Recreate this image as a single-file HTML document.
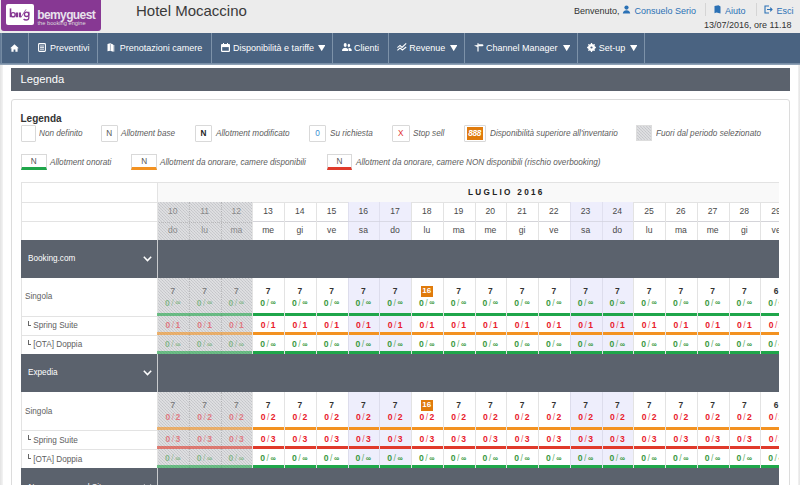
<!DOCTYPE html><html><head><meta charset="utf-8"><style>
*{margin:0;padding:0;box-sizing:border-box}
html,body{width:800px;height:485px;overflow:hidden;background:#fff;font-family:"Liberation Sans", sans-serif;}
.abs{position:absolute}
#top{position:absolute;left:0;top:0;width:800px;height:33px;background:#ececec}
#logo{position:absolute;left:1px;top:0;width:100px;height:30.5px;background:#873893;border-radius:0 0 3px 3px}
#nav{position:absolute;left:0;top:33px;width:800px;height:31px;background:#4a6381;border-bottom:1px solid #3f5670}
.nv{position:absolute;top:0;height:30px;border-left:1px solid #7e93aa;color:#fff;font-size:9px;line-height:30px;white-space:nowrap}
.t{position:absolute;white-space:nowrap}
.hbar{position:absolute;background:#5b626d;color:#fff}
.lbox{position:absolute;border:1px solid #dcdcdc;background:#fff}
.lt{position:absolute;font-size:9.2px;font-style:italic;color:#5c5c5c;white-space:nowrap;line-height:10px;transform:scaleX(0.89);transform-origin:0 0;margin-top:-0.5px}
.grid{position:absolute;left:21px;top:182px;width:758px;height:303px;overflow:hidden}
.c{position:absolute;text-align:center;white-space:nowrap}
.hatch{background-color:#c3c4c8;background-image:repeating-linear-gradient(45deg,rgba(255,255,255,.38) 0 1px,transparent 1px 2.12px),repeating-linear-gradient(-45deg,rgba(255,255,255,.12) 0 1px,transparent 1px 2.12px)}
</style></head><body>
<div class="abs" style="left:0;top:64px;width:2.5px;height:421px;background:linear-gradient(90deg,#e2e2e2,#f4f4f4)"></div>
<div class="abs" style="left:798px;top:64px;width:2px;height:421px;background:linear-gradient(90deg,#f2f2f2,#e4e4e4)"></div>
<div id="top"></div>
<div id="logo"><div class="abs" style="left:5px;top:4px;width:27.5px;height:21px;background:#fff;border-radius:2px"></div><svg class="abs" style="left:0;top:0" width="40" height="30" viewBox="0 0 40 30"><g fill="none" stroke="#873893"><path d="M9.5 8.4 V17.2" stroke-width="1.6"/><circle cx="12.1" cy="14.7" r="2.1" stroke-width="1.4"/><path d="M15.9 12.4 V17.2 M18.9 12.4 V17.2" stroke-width="2.2"/><path d="M19.8 17.6 L25 9.4" stroke-width="0.8"/><circle cx="25.6" cy="14.3" r="2.2" stroke-width="1.3"/><path d="M27.8 11.8 V17.8 Q27.8 20 25.2 20 Q23.4 20 22.6 19" stroke-width="1.3"/></g></svg><div class="t" style="left:36.2px;top:7.6px;font-size:12px;font-weight:bold;color:#e8e2ec;line-height:14px;letter-spacing:-0.6px">bemyguest</div><div class="t" style="left:36.5px;top:20px;font-size:5.7px;color:#ddd;line-height:6px;letter-spacing:0px">the booking engine</div></div>
<div class="t" style="left:136px;top:0.5px;font-size:15px;line-height:20px;color:#3a3a3a">Hotel Mocaccino</div>
<div class="t" style="left:574px;top:4.5px;font-size:9px;line-height:12px;color:#333">Benvenuto,</div>
<svg class="abs" style="left:622px;top:4.5px" width="9" height="9" viewBox="0 0 9 9"><circle cx="4.5" cy="2.6" r="2.1" fill="#2b71b5"/><path d="M0.8 8.6 Q1 5.4 4.5 5.3 Q8 5.4 8.2 8.6Z" fill="#2b71b5"/></svg>
<div class="t" style="left:634.5px;top:4.5px;font-size:9px;line-height:12px;color:#2b71b5">Consuelo Serio</div>
<div class="abs" style="left:705px;top:3px;width:1px;height:13px;background:#d5d5d5"></div>
<svg class="abs" style="left:714px;top:4.5px" width="7" height="9" viewBox="0 0 7 9"><path d="M0.5 1 L4.5 0.2 L6.5 1.5 L6.5 8.6 L2.5 7.6 L0.5 8.2Z" fill="#2b71b5"/></svg>
<div class="t" style="left:725px;top:4.5px;font-size:9px;line-height:12px;color:#2b71b5">Aiuto</div>
<div class="abs" style="left:756px;top:3px;width:1px;height:13px;background:#d5d5d5"></div>
<svg class="abs" style="left:764px;top:4.5px" width="9" height="9" viewBox="0 0 9 9"><path d="M5 1 H1 V8 H5" fill="none" stroke="#2b71b5" stroke-width="1.1"/><path d="M3 4.5 H8 M6.2 2.7 L8 4.5 L6.2 6.3" fill="none" stroke="#2b71b5" stroke-width="1.1"/></svg>
<div class="t" style="left:776.5px;top:4.5px;font-size:9px;line-height:12px;color:#2b71b5">Esci</div>
<div class="t" style="left:704px;top:19px;font-size:9px;line-height:12px;color:#333">13/07/2016, ore 11.18</div>
<div id="nav">
<div class="abs" style="left:1px;top:0;width:1px;height:30px;background:#7e93aa"></div>
</div>
<div class="abs" style="left:0;top:33px;width:800px;height:30px;background:#4a6381"></div>
<div class="abs" style="left:0;top:62.5px;width:800px;height:2px;background:linear-gradient(#6c839d,#9aabbd)"></div>
<div class="abs" style="left:0;top:33px;width:2px;height:29.5px;background:linear-gradient(90deg,#5d7591,#7d92a9)"></div>
<div class="abs" style="left:28px;top:33px;width:1px;height:29.5px;background:#7d92a9"></div>
<div class="abs" style="left:97px;top:33px;width:1px;height:29.5px;background:#7d92a9"></div>
<div class="abs" style="left:211px;top:33px;width:1px;height:29.5px;background:#7d92a9"></div>
<div class="abs" style="left:332px;top:33px;width:1px;height:29.5px;background:#7d92a9"></div>
<div class="abs" style="left:388px;top:33px;width:1px;height:29.5px;background:#7d92a9"></div>
<div class="abs" style="left:464px;top:33px;width:1px;height:29.5px;background:#7d92a9"></div>
<div class="abs" style="left:577px;top:33px;width:1px;height:29.5px;background:#7d92a9"></div>
<div class="abs" style="left:644px;top:33px;width:1px;height:29.5px;background:#7d92a9"></div>
<div class="abs" style="left:10px;top:43.5px;line-height:0"><svg width="9" height="8" viewBox="0 0 9 8"><path d="M4.5 0.3 L8.8 4.2 L7.6 4.2 L7.6 7.8 L5.4 7.8 L5.4 5.4 L3.6 5.4 L3.6 7.8 L1.4 7.8 L1.4 4.2 L0.2 4.2Z" fill="#fff"/></svg></div>
<div class="abs" style="left:37.5px;top:43px;line-height:0"><svg width="8" height="9" viewBox="0 0 8 9"><rect x="0.6" y="0.6" width="6.8" height="7.8" rx="0.8" fill="none" stroke="#fff" stroke-width="1.1"/><path d="M2 3 H6 M2 4.6 H6 M2 6.2 H6" stroke="#fff" stroke-width="0.9"/></svg></div>
<div class="t" style="left:50px;top:42px;font-size:9px;line-height:12px;color:#fff">Preventivi</div>
<div class="abs" style="left:107.3px;top:43px;line-height:0"><svg width="8" height="9" viewBox="0 0 8 9"><path d="M0.5 1 L3.2 0.3 L6.2 1.6 L6.2 8.8 L3.2 7.8 L0.5 8.3Z" fill="#fff"/><path d="M6.8 2 V8.6" stroke="#fff" stroke-width="0.9"/><path d="M3.4 1.2 V7.6" stroke="#4a6381" stroke-width="0.5"/></svg></div>
<div class="t" style="left:119.7px;top:42px;font-size:9px;line-height:12px;color:#fff">Prenotazioni camere</div>
<div class="abs" style="left:220.7px;top:42.8px;line-height:0"><svg width="9" height="9" viewBox="0 0 9 9"><rect x="0.6" y="1.5" width="7.8" height="6.9" rx="0.6" fill="none" stroke="#fff" stroke-width="1.2"/><rect x="0.6" y="1.5" width="7.8" height="2.6" fill="#fff"/><path d="M2.5 0 V1.5 M6.5 0 V1.5" stroke="#fff" stroke-width="1"/></svg></div>
<div class="t" style="left:233.1px;top:42px;font-size:9px;line-height:12px;color:#fff">Disponibilità e tariffe</div>
<div class="abs" style="left:341.8px;top:43px;line-height:0"><svg width="10" height="8.2" viewBox="0 0 10 8.2"><ellipse cx="3.2" cy="2" rx="1.5" ry="1.9" fill="#fff"/><path d="M0 8.2 L0.3 6.2 Q1 4.9 3.2 4.7 Q5.4 4.9 6.1 6.2 L6.3 8.2Z" fill="#fff"/><ellipse cx="6.9" cy="2.4" rx="1.2" ry="1.6" fill="#fff"/><path d="M6.4 4.8 Q8.9 4.9 9.5 6.3 L9.8 8.2 L6.9 8.2 L6.7 6.2Z" fill="#fff"/></svg></div>
<div class="t" style="left:354px;top:42px;font-size:9px;line-height:12px;color:#fff">Clienti</div>
<div class="abs" style="left:397px;top:43.2px;line-height:0"><svg width="10" height="8" viewBox="0 0 10 8"><path d="M0.4 4.6 L3 2.4 L5 4.4 L9.2 0.4 M0.4 7.4 L3 5 L5.4 7 L9.2 4" fill="none" stroke="#fff" stroke-width="1.1"/></svg></div>
<div class="t" style="left:409.2px;top:42px;font-size:9px;line-height:12px;color:#fff">Revenue</div>
<div class="abs" style="left:473.6px;top:42.8px;line-height:0"><svg width="10" height="9" viewBox="0 0 10 9"><path d="M4 0.2 V8.6" stroke="#fff" stroke-width="1.2"/><path d="M3.8 2 L0 2.6 L3.8 4.2Z" fill="#fff"/><path d="M4.2 1.2 H8.6 L9.6 2.2 L8.6 3.2 H4.2Z" fill="#fff"/></svg></div>
<div class="t" style="left:486px;top:42px;font-size:9px;line-height:12px;color:#fff">Channel Manager</div>
<div class="abs" style="left:587.2px;top:42.6px;line-height:0"><svg width="9" height="9" viewBox="0 0 9 9"><circle cx="4.5" cy="4.5" r="2.7" fill="none" stroke="#fff" stroke-width="1.7"/><path d="M4.5 0.1 V8.9 M0.1 4.5 H8.9 M1.4 1.4 L7.6 7.6 M7.6 1.4 L1.4 7.6" stroke="#fff" stroke-width="1.3"/><circle cx="4.5" cy="4.5" r="1.1" fill="#4a6381"/></svg></div>
<div class="t" style="left:598.8px;top:42px;font-size:9px;line-height:12px;color:#fff">Set-up</div>
<svg class="abs" style="left:317.5px;top:45px" width="7.4" height="6.2" viewBox="0 0 7.4 6.2"><path d="M0 0 H7.4 L3.7 6.2Z" fill="#fff"/></svg>
<svg class="abs" style="left:450px;top:45px" width="7.4" height="6.2" viewBox="0 0 7.4 6.2"><path d="M0 0 H7.4 L3.7 6.2Z" fill="#fff"/></svg>
<svg class="abs" style="left:562.8px;top:45px" width="7.4" height="6.2" viewBox="0 0 7.4 6.2"><path d="M0 0 H7.4 L3.7 6.2Z" fill="#fff"/></svg>
<svg class="abs" style="left:629.9px;top:45px" width="7.4" height="6.2" viewBox="0 0 7.4 6.2"><path d="M0 0 H7.4 L3.7 6.2Z" fill="#fff"/></svg>
<div class="hbar" style="left:11px;top:68px;width:779px;height:23px"><div class="t" style="left:9.5px;top:5px;font-size:11.25px;line-height:13px">Legenda</div></div>
<div class="lbox" style="left:11px;top:99px;width:779px;height:400px;border-radius:3px"></div>
<div class="t" style="left:20.5px;top:112.5px;font-size:10px;font-weight:bold;color:#333;line-height:12px">Legenda</div>
<div class="abs" style="left:21px;top:125.25px;width:14.6px;height:16.25px;border:1px solid #d9d9d9;border-radius:1px;background:#fff;text-align:center;font-size:8.2px;line-height:15.75px;color:#555;"></div>
<div class="lt" style="left:38.75px;top:128.5px">Non definito</div>
<div class="abs" style="left:101px;top:125.25px;width:16.5px;height:16.25px;border:1px solid #d9d9d9;border-radius:1px;background:#fff;text-align:center;font-size:8.2px;line-height:15.75px;color:#555;">N</div>
<div class="lt" style="left:121px;top:128.5px">Allotment base</div>
<div class="abs" style="left:195px;top:125.25px;width:16.75px;height:16.25px;border:1px solid #d9d9d9;border-radius:1px;background:#fff;text-align:center;font-size:8.2px;line-height:15.75px;color:#555;"><b style="color:#222">N</b></div>
<div class="lt" style="left:215.5px;top:128.5px">Allotment modificato</div>
<div class="abs" style="left:309.25px;top:125.25px;width:16.5px;height:16.25px;border:1px solid #d9d9d9;border-radius:1px;background:#fff;text-align:center;font-size:8.2px;line-height:15.75px;color:#555;"><span style="color:#3a8fd0">0</span></div>
<div class="lt" style="left:329.5px;top:128.5px">Su richiesta</div>
<div class="abs" style="left:392px;top:125.25px;width:17.5px;height:16.25px;border:1px solid #d9d9d9;border-radius:1px;background:#fff;text-align:center;font-size:8.2px;line-height:15.75px;color:#555;"><span style="color:#e03030">X</span></div>
<div class="lt" style="left:413px;top:128.5px">Stop sell</div>
<div class="abs" style="left:463.75px;top:125.25px;width:22px;height:16.25px;border:1px solid #d9d9d9;border-radius:1px;background:#fff;text-align:center;font-size:8.2px;line-height:15.75px;color:#555;"><div class="abs" style="left:2.2px;top:0.8px;width:15.8px;height:13px;background:#e07b0c;color:#fff;font-weight:bold;font-size:8.2px;line-height:13px;letter-spacing:-0.3px;text-indent:-0.3px;font-style:italic">888</div></div>
<div class="lt" style="left:489.5px;top:128.5px">Disponibilità superiore all&#39;inventario</div>
<div class="abs hatch" style="left:636.25px;top:125px;width:15.75px;height:16.25px;border:1px solid #ddd"></div>
<div class="lt" style="left:655.5px;top:128.5px">Fuori dal periodo selezionato</div>
<div class="abs" style="left:21px;top:154px;width:25.5px;height:15.8px;border:1px solid #d9d9d9;border-bottom:3px solid #1fa64a;background:#fff;text-align:center;font-size:8.2px;line-height:13px;color:#555">N</div>
<div class="lt" style="left:50.25px;top:157px">Allotment onorati</div>
<div class="abs" style="left:131.25px;top:154px;width:25.75px;height:15.8px;border:1px solid #d9d9d9;border-bottom:3px solid #f39221;background:#fff;text-align:center;font-size:8.2px;line-height:13px;color:#555">N</div>
<div class="lt" style="left:160px;top:157px">Allotment da onorare, camere disponibili</div>
<div class="abs" style="left:327px;top:154px;width:25px;height:15.8px;border:1px solid #d9d9d9;border-bottom:3px solid #e03a2b;background:#fff;text-align:center;font-size:8.2px;line-height:13px;color:#555">N</div>
<div class="lt" style="left:356.25px;top:157px">Allotment da onorare, camere NON disponibili (rischio overbooking)</div>
<div class="grid">
<div class="abs" style="left:136px;top:0;width:622px;height:20px;background:#f9f9f9"></div>
<div class="abs" style="left:0;top:0px;width:758px;height:1px;background:#e3e3e3"></div>
<div class="abs" style="left:0;top:20px;width:758px;height:1px;background:#e3e3e3"></div>
<div class="abs" style="left:0;top:39.19999999999999px;width:758px;height:1px;background:#e3e3e3"></div>
<div class="abs" style="left:0;top:0;width:1px;height:303px;background:#e3e3e3"></div>
<div class="abs hatch" style="left:136.0px;top:20px;width:31.75px;height:38px;"></div>
<div class="abs hatch" style="left:167.75px;top:20px;width:31.75px;height:38px;"></div>
<div class="abs hatch" style="left:199.5px;top:20px;width:31.75px;height:38px;"></div>
<div class="abs" style="left:231.25px;top:20px;width:31.75px;height:38px;"></div>
<div class="abs" style="left:263.0px;top:20px;width:31.75px;height:38px;"></div>
<div class="abs" style="left:294.75px;top:20px;width:31.75px;height:38px;"></div>
<div class="abs" style="left:326.5px;top:20px;width:31.75px;height:38px;background:#eeeefc;"></div>
<div class="abs" style="left:358.25px;top:20px;width:31.75px;height:38px;background:#eeeefc;"></div>
<div class="abs" style="left:390.0px;top:20px;width:31.75px;height:38px;"></div>
<div class="abs" style="left:421.75px;top:20px;width:31.75px;height:38px;"></div>
<div class="abs" style="left:453.5px;top:20px;width:31.75px;height:38px;"></div>
<div class="abs" style="left:485.25px;top:20px;width:31.75px;height:38px;"></div>
<div class="abs" style="left:517.0px;top:20px;width:31.75px;height:38px;"></div>
<div class="abs" style="left:548.75px;top:20px;width:31.75px;height:38px;background:#eeeefc;"></div>
<div class="abs" style="left:580.5px;top:20px;width:31.75px;height:38px;background:#eeeefc;"></div>
<div class="abs" style="left:612.25px;top:20px;width:31.75px;height:38px;"></div>
<div class="abs" style="left:644.0px;top:20px;width:31.75px;height:38px;"></div>
<div class="abs" style="left:675.75px;top:20px;width:31.75px;height:38px;"></div>
<div class="abs" style="left:707.5px;top:20px;width:31.75px;height:38px;"></div>
<div class="abs" style="left:739.25px;top:20px;width:31.75px;height:38px;"></div>
<div class="abs" style="left:231.25px;top:39.19999999999999px;width:526.75px;height:1px;background:rgba(200,200,210,.55)"></div>
<div class="abs" style="left:136px;top:39.5px;width:95.25px;height:0;border-top:1px dotted rgba(150,150,150,.45)"></div>
<div class="c" style="left:136.0px;top:23.5px;width:31.75px;font-size:8.6px;line-height:11px;color:#4a4a4a;opacity:.55;">10</div>
<div class="c" style="left:136.0px;top:42.5px;width:31.75px;font-size:8.6px;line-height:11px;color:#4a4a4a;opacity:.55;">do</div>
<div class="c" style="left:167.75px;top:23.5px;width:31.75px;font-size:8.6px;line-height:11px;color:#4a4a4a;opacity:.55;">11</div>
<div class="c" style="left:167.75px;top:42.5px;width:31.75px;font-size:8.6px;line-height:11px;color:#4a4a4a;opacity:.55;">lu</div>
<div class="abs" style="left:167.75px;top:20px;width:0;height:38px;border-left:1px dotted rgba(150,150,150,.45)"></div>
<div class="c" style="left:199.5px;top:23.5px;width:31.75px;font-size:8.6px;line-height:11px;color:#4a4a4a;opacity:.55;">12</div>
<div class="c" style="left:199.5px;top:42.5px;width:31.75px;font-size:8.6px;line-height:11px;color:#4a4a4a;opacity:.55;">ma</div>
<div class="abs" style="left:199.5px;top:20px;width:0;height:38px;border-left:1px dotted rgba(150,150,150,.45)"></div>
<div class="c" style="left:231.25px;top:23.5px;width:31.75px;font-size:8.6px;line-height:11px;color:#4a4a4a;">13</div>
<div class="c" style="left:231.25px;top:42.5px;width:31.75px;font-size:8.6px;line-height:11px;color:#4a4a4a;">me</div>
<div class="abs" style="left:231.25px;top:20px;width:1px;height:38px;background:#e3e3e3"></div>
<div class="c" style="left:263.0px;top:23.5px;width:31.75px;font-size:8.6px;line-height:11px;color:#4a4a4a;">14</div>
<div class="c" style="left:263.0px;top:42.5px;width:31.75px;font-size:8.6px;line-height:11px;color:#4a4a4a;">gi</div>
<div class="abs" style="left:263.0px;top:20px;width:1px;height:38px;background:#e3e3e3"></div>
<div class="c" style="left:294.75px;top:23.5px;width:31.75px;font-size:8.6px;line-height:11px;color:#4a4a4a;">15</div>
<div class="c" style="left:294.75px;top:42.5px;width:31.75px;font-size:8.6px;line-height:11px;color:#4a4a4a;">ve</div>
<div class="abs" style="left:294.75px;top:20px;width:1px;height:38px;background:#e3e3e3"></div>
<div class="c" style="left:326.5px;top:23.5px;width:31.75px;font-size:8.6px;line-height:11px;color:#4a4a4a;">16</div>
<div class="c" style="left:326.5px;top:42.5px;width:31.75px;font-size:8.6px;line-height:11px;color:#4a4a4a;">sa</div>
<div class="abs" style="left:326.5px;top:20px;width:1px;height:38px;background:rgba(210,210,225,.5)"></div>
<div class="c" style="left:358.25px;top:23.5px;width:31.75px;font-size:8.6px;line-height:11px;color:#4a4a4a;">17</div>
<div class="c" style="left:358.25px;top:42.5px;width:31.75px;font-size:8.6px;line-height:11px;color:#4a4a4a;">do</div>
<div class="abs" style="left:358.25px;top:20px;width:1px;height:38px;background:rgba(210,210,225,.5)"></div>
<div class="c" style="left:390.0px;top:23.5px;width:31.75px;font-size:8.6px;line-height:11px;color:#4a4a4a;">18</div>
<div class="c" style="left:390.0px;top:42.5px;width:31.75px;font-size:8.6px;line-height:11px;color:#4a4a4a;">lu</div>
<div class="abs" style="left:390.0px;top:20px;width:1px;height:38px;background:#e3e3e3"></div>
<div class="c" style="left:421.75px;top:23.5px;width:31.75px;font-size:8.6px;line-height:11px;color:#4a4a4a;">19</div>
<div class="c" style="left:421.75px;top:42.5px;width:31.75px;font-size:8.6px;line-height:11px;color:#4a4a4a;">ma</div>
<div class="abs" style="left:421.75px;top:20px;width:1px;height:38px;background:#e3e3e3"></div>
<div class="c" style="left:453.5px;top:23.5px;width:31.75px;font-size:8.6px;line-height:11px;color:#4a4a4a;">20</div>
<div class="c" style="left:453.5px;top:42.5px;width:31.75px;font-size:8.6px;line-height:11px;color:#4a4a4a;">me</div>
<div class="abs" style="left:453.5px;top:20px;width:1px;height:38px;background:#e3e3e3"></div>
<div class="c" style="left:485.25px;top:23.5px;width:31.75px;font-size:8.6px;line-height:11px;color:#4a4a4a;">21</div>
<div class="c" style="left:485.25px;top:42.5px;width:31.75px;font-size:8.6px;line-height:11px;color:#4a4a4a;">gi</div>
<div class="abs" style="left:485.25px;top:20px;width:1px;height:38px;background:#e3e3e3"></div>
<div class="c" style="left:517.0px;top:23.5px;width:31.75px;font-size:8.6px;line-height:11px;color:#4a4a4a;">22</div>
<div class="c" style="left:517.0px;top:42.5px;width:31.75px;font-size:8.6px;line-height:11px;color:#4a4a4a;">ve</div>
<div class="abs" style="left:517.0px;top:20px;width:1px;height:38px;background:#e3e3e3"></div>
<div class="c" style="left:548.75px;top:23.5px;width:31.75px;font-size:8.6px;line-height:11px;color:#4a4a4a;">23</div>
<div class="c" style="left:548.75px;top:42.5px;width:31.75px;font-size:8.6px;line-height:11px;color:#4a4a4a;">sa</div>
<div class="abs" style="left:548.75px;top:20px;width:1px;height:38px;background:rgba(210,210,225,.5)"></div>
<div class="c" style="left:580.5px;top:23.5px;width:31.75px;font-size:8.6px;line-height:11px;color:#4a4a4a;">24</div>
<div class="c" style="left:580.5px;top:42.5px;width:31.75px;font-size:8.6px;line-height:11px;color:#4a4a4a;">do</div>
<div class="abs" style="left:580.5px;top:20px;width:1px;height:38px;background:rgba(210,210,225,.5)"></div>
<div class="c" style="left:612.25px;top:23.5px;width:31.75px;font-size:8.6px;line-height:11px;color:#4a4a4a;">25</div>
<div class="c" style="left:612.25px;top:42.5px;width:31.75px;font-size:8.6px;line-height:11px;color:#4a4a4a;">lu</div>
<div class="abs" style="left:612.25px;top:20px;width:1px;height:38px;background:#e3e3e3"></div>
<div class="c" style="left:644.0px;top:23.5px;width:31.75px;font-size:8.6px;line-height:11px;color:#4a4a4a;">26</div>
<div class="c" style="left:644.0px;top:42.5px;width:31.75px;font-size:8.6px;line-height:11px;color:#4a4a4a;">ma</div>
<div class="abs" style="left:644.0px;top:20px;width:1px;height:38px;background:#e3e3e3"></div>
<div class="c" style="left:675.75px;top:23.5px;width:31.75px;font-size:8.6px;line-height:11px;color:#4a4a4a;">27</div>
<div class="c" style="left:675.75px;top:42.5px;width:31.75px;font-size:8.6px;line-height:11px;color:#4a4a4a;">me</div>
<div class="abs" style="left:675.75px;top:20px;width:1px;height:38px;background:#e3e3e3"></div>
<div class="c" style="left:707.5px;top:23.5px;width:31.75px;font-size:8.6px;line-height:11px;color:#4a4a4a;">28</div>
<div class="c" style="left:707.5px;top:42.5px;width:31.75px;font-size:8.6px;line-height:11px;color:#4a4a4a;">gi</div>
<div class="abs" style="left:707.5px;top:20px;width:1px;height:38px;background:#e3e3e3"></div>
<div class="c" style="left:739.25px;top:23.5px;width:31.75px;font-size:8.6px;line-height:11px;color:#4a4a4a;">29</div>
<div class="c" style="left:739.25px;top:42.5px;width:31.75px;font-size:8.6px;line-height:11px;color:#4a4a4a;">ve</div>
<div class="abs" style="left:739.25px;top:20px;width:1px;height:38px;background:#e3e3e3"></div>
<div class="abs" style="left:136px;top:0;width:1px;height:58px;background:#e3e3e3"></div>
<div class="t" style="left:447px;top:4.5px;font-size:8.2px;font-weight:bold;letter-spacing:2.3px;line-height:11px;color:#222">LUGLIO 2016</div>
<div class="abs" style="left:0;top:58px;width:758px;height:37.5px;background:#5b626d"></div>
<div class="abs" style="left:135.5px;top:58px;width:1.3px;height:37.5px;background:#c9cbce"></div>
<div class="t" style="left:7px;top:71px;font-size:8.2px;line-height:11px;color:#fff">Booking.com</div>
<svg class="abs" style="left:121.5px;top:73.5px" width="9" height="6" viewBox="0 0 9 6"><path d="M0.8 0.8 L4.5 4.6 L8.2 0.8" fill="none" stroke="#fff" stroke-width="1.5"/></svg>
<div class="abs" style="left:0;top:133.60000000000002px;width:136px;height:1px;background:#e3e3e3"></div>
<div class="t" style="left:4px;top:109.39999999999998px;font-size:8.2px;line-height:11px;color:#5e5e5e">Singola</div>
<div class="abs hatch" style="left:136.0px;top:95.5px;width:31.75px;height:38.6px;"></div>
<div class="abs" style="left:136.0px;top:95.5px;width:1px;height:38.6px;background:#e3e3e3"></div>
<div class="abs" style="left:136.0px;top:131.3px;width:31.75px;height:2.8px;background:#1fa64a;opacity:.6;"></div>
<div class="c" style="left:136.0px;top:103.80000000000001px;width:31.75px;font-size:8.4px;font-weight:bold;line-height:11px;color:#333;opacity:.5;">7</div>
<div class="c" style="left:136.0px;top:116.0px;width:31.75px;font-size:8.6px;font-weight:bold;line-height:11px;color:#3b9a3f;opacity:.5;">0<span style="font-weight:normal;margin:0 1.5px;opacity:.75">/</span><span style="font-size:7.6px;position:relative;top:-0.6px">&#8734;</span></div>
<div class="abs hatch" style="left:167.75px;top:95.5px;width:31.75px;height:38.6px;"></div>
<div class="abs" style="left:167.75px;top:95.5px;width:0;height:38.6px;border-left:1px dotted rgba(150,150,150,.45)"></div>
<div class="abs" style="left:167.75px;top:131.3px;width:31.75px;height:2.8px;background:#1fa64a;opacity:.6;"></div>
<div class="c" style="left:167.75px;top:103.80000000000001px;width:31.75px;font-size:8.4px;font-weight:bold;line-height:11px;color:#333;opacity:.5;">7</div>
<div class="c" style="left:167.75px;top:116.0px;width:31.75px;font-size:8.6px;font-weight:bold;line-height:11px;color:#3b9a3f;opacity:.5;">0<span style="font-weight:normal;margin:0 1.5px;opacity:.75">/</span><span style="font-size:7.6px;position:relative;top:-0.6px">&#8734;</span></div>
<div class="abs hatch" style="left:199.5px;top:95.5px;width:31.75px;height:38.6px;"></div>
<div class="abs" style="left:199.5px;top:95.5px;width:0;height:38.6px;border-left:1px dotted rgba(150,150,150,.45)"></div>
<div class="abs" style="left:199.5px;top:131.3px;width:31.75px;height:2.8px;background:#1fa64a;opacity:.6;"></div>
<div class="c" style="left:199.5px;top:103.80000000000001px;width:31.75px;font-size:8.4px;font-weight:bold;line-height:11px;color:#333;opacity:.5;">7</div>
<div class="c" style="left:199.5px;top:116.0px;width:31.75px;font-size:8.6px;font-weight:bold;line-height:11px;color:#3b9a3f;opacity:.5;">0<span style="font-weight:normal;margin:0 1.5px;opacity:.75">/</span><span style="font-size:7.6px;position:relative;top:-0.6px">&#8734;</span></div>
<div class="abs" style="left:231.25px;top:95.5px;width:31.75px;height:38.6px;"></div>
<div class="abs" style="left:231.25px;top:95.5px;width:1px;height:38.6px;background:#e3e3e3"></div>
<div class="abs" style="left:232.25px;top:131.3px;width:30.75px;height:2.8px;background:#1fa64a;"></div>
<div class="c" style="left:231.25px;top:103.80000000000001px;width:31.75px;font-size:8.4px;font-weight:bold;line-height:11px;color:#333;">7</div>
<div class="c" style="left:231.25px;top:116.0px;width:31.75px;font-size:8.6px;font-weight:bold;line-height:11px;color:#3b9a3f;">0<span style="font-weight:normal;margin:0 1.5px;opacity:.75">/</span><span style="font-size:7.6px;position:relative;top:-0.6px">&#8734;</span></div>
<div class="abs" style="left:263.0px;top:95.5px;width:31.75px;height:38.6px;"></div>
<div class="abs" style="left:263.0px;top:95.5px;width:1px;height:38.6px;background:#e3e3e3"></div>
<div class="abs" style="left:264.0px;top:131.3px;width:30.75px;height:2.8px;background:#1fa64a;"></div>
<div class="c" style="left:263.0px;top:103.80000000000001px;width:31.75px;font-size:8.4px;font-weight:bold;line-height:11px;color:#333;">7</div>
<div class="c" style="left:263.0px;top:116.0px;width:31.75px;font-size:8.6px;font-weight:bold;line-height:11px;color:#3b9a3f;">0<span style="font-weight:normal;margin:0 1.5px;opacity:.75">/</span><span style="font-size:7.6px;position:relative;top:-0.6px">&#8734;</span></div>
<div class="abs" style="left:294.75px;top:95.5px;width:31.75px;height:38.6px;"></div>
<div class="abs" style="left:294.75px;top:95.5px;width:1px;height:38.6px;background:#e3e3e3"></div>
<div class="abs" style="left:295.75px;top:131.3px;width:30.75px;height:2.8px;background:#1fa64a;"></div>
<div class="c" style="left:294.75px;top:103.80000000000001px;width:31.75px;font-size:8.4px;font-weight:bold;line-height:11px;color:#333;">7</div>
<div class="c" style="left:294.75px;top:116.0px;width:31.75px;font-size:8.6px;font-weight:bold;line-height:11px;color:#3b9a3f;">0<span style="font-weight:normal;margin:0 1.5px;opacity:.75">/</span><span style="font-size:7.6px;position:relative;top:-0.6px">&#8734;</span></div>
<div class="abs" style="left:326.5px;top:95.5px;width:31.75px;height:38.6px;background:#eeeefc;"></div>
<div class="abs" style="left:326.5px;top:95.5px;width:1px;height:38.6px;background:rgba(210,210,225,.6)"></div>
<div class="abs" style="left:327.5px;top:131.3px;width:30.75px;height:2.8px;background:#1fa64a;"></div>
<div class="c" style="left:326.5px;top:103.80000000000001px;width:31.75px;font-size:8.4px;font-weight:bold;line-height:11px;color:#333;">7</div>
<div class="c" style="left:326.5px;top:116.0px;width:31.75px;font-size:8.6px;font-weight:bold;line-height:11px;color:#3b9a3f;">0<span style="font-weight:normal;margin:0 1.5px;opacity:.75">/</span><span style="font-size:7.6px;position:relative;top:-0.6px">&#8734;</span></div>
<div class="abs" style="left:358.25px;top:95.5px;width:31.75px;height:38.6px;background:#eeeefc;"></div>
<div class="abs" style="left:358.25px;top:95.5px;width:1px;height:38.6px;background:rgba(210,210,225,.6)"></div>
<div class="abs" style="left:359.25px;top:131.3px;width:30.75px;height:2.8px;background:#1fa64a;"></div>
<div class="c" style="left:358.25px;top:103.80000000000001px;width:31.75px;font-size:8.4px;font-weight:bold;line-height:11px;color:#333;">7</div>
<div class="c" style="left:358.25px;top:116.0px;width:31.75px;font-size:8.6px;font-weight:bold;line-height:11px;color:#3b9a3f;">0<span style="font-weight:normal;margin:0 1.5px;opacity:.75">/</span><span style="font-size:7.6px;position:relative;top:-0.6px">&#8734;</span></div>
<div class="abs" style="left:390.0px;top:95.5px;width:31.75px;height:38.6px;"></div>
<div class="abs" style="left:390.0px;top:95.5px;width:1px;height:38.6px;background:#e3e3e3"></div>
<div class="abs" style="left:391.0px;top:131.3px;width:30.75px;height:2.8px;background:#1fa64a;"></div>
<div class="abs" style="left:399.9px;top:104.30000000000001px;width:11.8px;height:10.3px;background:#e07b0c;color:#fff;font-weight:bold;font-size:8px;line-height:10.3px;text-align:center">16</div>
<div class="c" style="left:390.0px;top:116.0px;width:31.75px;font-size:8.6px;font-weight:bold;line-height:11px;color:#3b9a3f;">0<span style="font-weight:normal;margin:0 1.5px;opacity:.75">/</span><span style="font-size:7.6px;position:relative;top:-0.6px">&#8734;</span></div>
<div class="abs" style="left:421.75px;top:95.5px;width:31.75px;height:38.6px;"></div>
<div class="abs" style="left:421.75px;top:95.5px;width:1px;height:38.6px;background:#e3e3e3"></div>
<div class="abs" style="left:422.75px;top:131.3px;width:30.75px;height:2.8px;background:#1fa64a;"></div>
<div class="c" style="left:421.75px;top:103.80000000000001px;width:31.75px;font-size:8.4px;font-weight:bold;line-height:11px;color:#333;">7</div>
<div class="c" style="left:421.75px;top:116.0px;width:31.75px;font-size:8.6px;font-weight:bold;line-height:11px;color:#3b9a3f;">0<span style="font-weight:normal;margin:0 1.5px;opacity:.75">/</span><span style="font-size:7.6px;position:relative;top:-0.6px">&#8734;</span></div>
<div class="abs" style="left:453.5px;top:95.5px;width:31.75px;height:38.6px;"></div>
<div class="abs" style="left:453.5px;top:95.5px;width:1px;height:38.6px;background:#e3e3e3"></div>
<div class="abs" style="left:454.5px;top:131.3px;width:30.75px;height:2.8px;background:#1fa64a;"></div>
<div class="c" style="left:453.5px;top:103.80000000000001px;width:31.75px;font-size:8.4px;font-weight:bold;line-height:11px;color:#333;">7</div>
<div class="c" style="left:453.5px;top:116.0px;width:31.75px;font-size:8.6px;font-weight:bold;line-height:11px;color:#3b9a3f;">0<span style="font-weight:normal;margin:0 1.5px;opacity:.75">/</span><span style="font-size:7.6px;position:relative;top:-0.6px">&#8734;</span></div>
<div class="abs" style="left:485.25px;top:95.5px;width:31.75px;height:38.6px;"></div>
<div class="abs" style="left:485.25px;top:95.5px;width:1px;height:38.6px;background:#e3e3e3"></div>
<div class="abs" style="left:486.25px;top:131.3px;width:30.75px;height:2.8px;background:#1fa64a;"></div>
<div class="c" style="left:485.25px;top:103.80000000000001px;width:31.75px;font-size:8.4px;font-weight:bold;line-height:11px;color:#333;">7</div>
<div class="c" style="left:485.25px;top:116.0px;width:31.75px;font-size:8.6px;font-weight:bold;line-height:11px;color:#3b9a3f;">0<span style="font-weight:normal;margin:0 1.5px;opacity:.75">/</span><span style="font-size:7.6px;position:relative;top:-0.6px">&#8734;</span></div>
<div class="abs" style="left:517.0px;top:95.5px;width:31.75px;height:38.6px;"></div>
<div class="abs" style="left:517.0px;top:95.5px;width:1px;height:38.6px;background:#e3e3e3"></div>
<div class="abs" style="left:518.0px;top:131.3px;width:30.75px;height:2.8px;background:#1fa64a;"></div>
<div class="c" style="left:517.0px;top:103.80000000000001px;width:31.75px;font-size:8.4px;font-weight:bold;line-height:11px;color:#333;">7</div>
<div class="c" style="left:517.0px;top:116.0px;width:31.75px;font-size:8.6px;font-weight:bold;line-height:11px;color:#3b9a3f;">0<span style="font-weight:normal;margin:0 1.5px;opacity:.75">/</span><span style="font-size:7.6px;position:relative;top:-0.6px">&#8734;</span></div>
<div class="abs" style="left:548.75px;top:95.5px;width:31.75px;height:38.6px;background:#eeeefc;"></div>
<div class="abs" style="left:548.75px;top:95.5px;width:1px;height:38.6px;background:rgba(210,210,225,.6)"></div>
<div class="abs" style="left:549.75px;top:131.3px;width:30.75px;height:2.8px;background:#1fa64a;"></div>
<div class="c" style="left:548.75px;top:103.80000000000001px;width:31.75px;font-size:8.4px;font-weight:bold;line-height:11px;color:#333;">7</div>
<div class="c" style="left:548.75px;top:116.0px;width:31.75px;font-size:8.6px;font-weight:bold;line-height:11px;color:#3b9a3f;">0<span style="font-weight:normal;margin:0 1.5px;opacity:.75">/</span><span style="font-size:7.6px;position:relative;top:-0.6px">&#8734;</span></div>
<div class="abs" style="left:580.5px;top:95.5px;width:31.75px;height:38.6px;background:#eeeefc;"></div>
<div class="abs" style="left:580.5px;top:95.5px;width:1px;height:38.6px;background:rgba(210,210,225,.6)"></div>
<div class="abs" style="left:581.5px;top:131.3px;width:30.75px;height:2.8px;background:#1fa64a;"></div>
<div class="c" style="left:580.5px;top:103.80000000000001px;width:31.75px;font-size:8.4px;font-weight:bold;line-height:11px;color:#333;">7</div>
<div class="c" style="left:580.5px;top:116.0px;width:31.75px;font-size:8.6px;font-weight:bold;line-height:11px;color:#3b9a3f;">0<span style="font-weight:normal;margin:0 1.5px;opacity:.75">/</span><span style="font-size:7.6px;position:relative;top:-0.6px">&#8734;</span></div>
<div class="abs" style="left:612.25px;top:95.5px;width:31.75px;height:38.6px;"></div>
<div class="abs" style="left:612.25px;top:95.5px;width:1px;height:38.6px;background:#e3e3e3"></div>
<div class="abs" style="left:613.25px;top:131.3px;width:30.75px;height:2.8px;background:#1fa64a;"></div>
<div class="c" style="left:612.25px;top:103.80000000000001px;width:31.75px;font-size:8.4px;font-weight:bold;line-height:11px;color:#333;">7</div>
<div class="c" style="left:612.25px;top:116.0px;width:31.75px;font-size:8.6px;font-weight:bold;line-height:11px;color:#3b9a3f;">0<span style="font-weight:normal;margin:0 1.5px;opacity:.75">/</span><span style="font-size:7.6px;position:relative;top:-0.6px">&#8734;</span></div>
<div class="abs" style="left:644.0px;top:95.5px;width:31.75px;height:38.6px;"></div>
<div class="abs" style="left:644.0px;top:95.5px;width:1px;height:38.6px;background:#e3e3e3"></div>
<div class="abs" style="left:645.0px;top:131.3px;width:30.75px;height:2.8px;background:#1fa64a;"></div>
<div class="c" style="left:644.0px;top:103.80000000000001px;width:31.75px;font-size:8.4px;font-weight:bold;line-height:11px;color:#333;">7</div>
<div class="c" style="left:644.0px;top:116.0px;width:31.75px;font-size:8.6px;font-weight:bold;line-height:11px;color:#3b9a3f;">0<span style="font-weight:normal;margin:0 1.5px;opacity:.75">/</span><span style="font-size:7.6px;position:relative;top:-0.6px">&#8734;</span></div>
<div class="abs" style="left:675.75px;top:95.5px;width:31.75px;height:38.6px;"></div>
<div class="abs" style="left:675.75px;top:95.5px;width:1px;height:38.6px;background:#e3e3e3"></div>
<div class="abs" style="left:676.75px;top:131.3px;width:30.75px;height:2.8px;background:#1fa64a;"></div>
<div class="c" style="left:675.75px;top:103.80000000000001px;width:31.75px;font-size:8.4px;font-weight:bold;line-height:11px;color:#333;">7</div>
<div class="c" style="left:675.75px;top:116.0px;width:31.75px;font-size:8.6px;font-weight:bold;line-height:11px;color:#3b9a3f;">0<span style="font-weight:normal;margin:0 1.5px;opacity:.75">/</span><span style="font-size:7.6px;position:relative;top:-0.6px">&#8734;</span></div>
<div class="abs" style="left:707.5px;top:95.5px;width:31.75px;height:38.6px;"></div>
<div class="abs" style="left:707.5px;top:95.5px;width:1px;height:38.6px;background:#e3e3e3"></div>
<div class="abs" style="left:708.5px;top:131.3px;width:30.75px;height:2.8px;background:#1fa64a;"></div>
<div class="c" style="left:707.5px;top:103.80000000000001px;width:31.75px;font-size:8.4px;font-weight:bold;line-height:11px;color:#333;">7</div>
<div class="c" style="left:707.5px;top:116.0px;width:31.75px;font-size:8.6px;font-weight:bold;line-height:11px;color:#3b9a3f;">0<span style="font-weight:normal;margin:0 1.5px;opacity:.75">/</span><span style="font-size:7.6px;position:relative;top:-0.6px">&#8734;</span></div>
<div class="abs" style="left:739.25px;top:95.5px;width:31.75px;height:38.6px;"></div>
<div class="abs" style="left:739.25px;top:95.5px;width:1px;height:38.6px;background:#e3e3e3"></div>
<div class="abs" style="left:740.25px;top:131.3px;width:30.75px;height:2.8px;background:#1fa64a;"></div>
<div class="c" style="left:739.25px;top:103.80000000000001px;width:31.75px;font-size:8.4px;font-weight:bold;line-height:11px;color:#333;">6</div>
<div class="c" style="left:739.25px;top:116.0px;width:31.75px;font-size:8.6px;font-weight:bold;line-height:11px;color:#3b9a3f;">0<span style="font-weight:normal;margin:0 1.5px;opacity:.75">/</span><span style="font-size:7.6px;position:relative;top:-0.6px">&#8734;</span></div>
<div class="abs" style="left:0;top:152.60000000000002px;width:136px;height:1px;background:#e3e3e3"></div>
<div class="abs" style="left:6.600000000000001px;top:138.70000000000005px;width:3.4px;height:5.4px;border-left:1px solid #666;border-bottom:1px solid #666"></div>
<div class="t" style="left:12.200000000000003px;top:138.40000000000003px;font-size:8.2px;line-height:11px;color:#5e5e5e">Spring Suite</div>
<div class="abs hatch" style="left:136.0px;top:134.10000000000002px;width:31.75px;height:19px;"></div>
<div class="abs" style="left:136.0px;top:134.10000000000002px;width:1px;height:19px;background:#e3e3e3"></div>
<div class="abs" style="left:136.0px;top:150.3px;width:31.75px;height:2.8px;background:#f39221;opacity:.6;"></div>
<div class="c" style="left:136.0px;top:138.3px;width:31.75px;font-size:8.6px;font-weight:bold;line-height:11px;color:#e8202c;opacity:.5;">0<span style="font-weight:normal;margin:0 1.5px;opacity:.75">/</span>1</div>
<div class="abs hatch" style="left:167.75px;top:134.10000000000002px;width:31.75px;height:19px;"></div>
<div class="abs" style="left:167.75px;top:134.10000000000002px;width:0;height:19px;border-left:1px dotted rgba(150,150,150,.45)"></div>
<div class="abs" style="left:167.75px;top:150.3px;width:31.75px;height:2.8px;background:#f39221;opacity:.6;"></div>
<div class="c" style="left:167.75px;top:138.3px;width:31.75px;font-size:8.6px;font-weight:bold;line-height:11px;color:#e8202c;opacity:.5;">0<span style="font-weight:normal;margin:0 1.5px;opacity:.75">/</span>1</div>
<div class="abs hatch" style="left:199.5px;top:134.10000000000002px;width:31.75px;height:19px;"></div>
<div class="abs" style="left:199.5px;top:134.10000000000002px;width:0;height:19px;border-left:1px dotted rgba(150,150,150,.45)"></div>
<div class="abs" style="left:199.5px;top:150.3px;width:31.75px;height:2.8px;background:#f39221;opacity:.6;"></div>
<div class="c" style="left:199.5px;top:138.3px;width:31.75px;font-size:8.6px;font-weight:bold;line-height:11px;color:#e8202c;opacity:.5;">0<span style="font-weight:normal;margin:0 1.5px;opacity:.75">/</span>1</div>
<div class="abs" style="left:231.25px;top:134.10000000000002px;width:31.75px;height:19px;"></div>
<div class="abs" style="left:231.25px;top:134.10000000000002px;width:1px;height:19px;background:#e3e3e3"></div>
<div class="abs" style="left:232.25px;top:150.3px;width:30.75px;height:2.8px;background:#f39221;"></div>
<div class="c" style="left:231.25px;top:138.3px;width:31.75px;font-size:8.6px;font-weight:bold;line-height:11px;color:#e8202c;">0<span style="font-weight:normal;margin:0 1.5px;opacity:.75">/</span>1</div>
<div class="abs" style="left:263.0px;top:134.10000000000002px;width:31.75px;height:19px;"></div>
<div class="abs" style="left:263.0px;top:134.10000000000002px;width:1px;height:19px;background:#e3e3e3"></div>
<div class="abs" style="left:264.0px;top:150.3px;width:30.75px;height:2.8px;background:#f39221;"></div>
<div class="c" style="left:263.0px;top:138.3px;width:31.75px;font-size:8.6px;font-weight:bold;line-height:11px;color:#e8202c;">0<span style="font-weight:normal;margin:0 1.5px;opacity:.75">/</span>1</div>
<div class="abs" style="left:294.75px;top:134.10000000000002px;width:31.75px;height:19px;"></div>
<div class="abs" style="left:294.75px;top:134.10000000000002px;width:1px;height:19px;background:#e3e3e3"></div>
<div class="abs" style="left:295.75px;top:150.3px;width:30.75px;height:2.8px;background:#f39221;"></div>
<div class="c" style="left:294.75px;top:138.3px;width:31.75px;font-size:8.6px;font-weight:bold;line-height:11px;color:#e8202c;">0<span style="font-weight:normal;margin:0 1.5px;opacity:.75">/</span>1</div>
<div class="abs" style="left:326.5px;top:134.10000000000002px;width:31.75px;height:19px;background:#eeeefc;"></div>
<div class="abs" style="left:326.5px;top:134.10000000000002px;width:1px;height:19px;background:rgba(210,210,225,.6)"></div>
<div class="abs" style="left:327.5px;top:150.3px;width:30.75px;height:2.8px;background:#f39221;"></div>
<div class="c" style="left:326.5px;top:138.3px;width:31.75px;font-size:8.6px;font-weight:bold;line-height:11px;color:#e8202c;">0<span style="font-weight:normal;margin:0 1.5px;opacity:.75">/</span>1</div>
<div class="abs" style="left:358.25px;top:134.10000000000002px;width:31.75px;height:19px;background:#eeeefc;"></div>
<div class="abs" style="left:358.25px;top:134.10000000000002px;width:1px;height:19px;background:rgba(210,210,225,.6)"></div>
<div class="abs" style="left:359.25px;top:150.3px;width:30.75px;height:2.8px;background:#f39221;"></div>
<div class="c" style="left:358.25px;top:138.3px;width:31.75px;font-size:8.6px;font-weight:bold;line-height:11px;color:#e8202c;">0<span style="font-weight:normal;margin:0 1.5px;opacity:.75">/</span>1</div>
<div class="abs" style="left:390.0px;top:134.10000000000002px;width:31.75px;height:19px;"></div>
<div class="abs" style="left:390.0px;top:134.10000000000002px;width:1px;height:19px;background:#e3e3e3"></div>
<div class="abs" style="left:391.0px;top:150.3px;width:30.75px;height:2.8px;background:#f39221;"></div>
<div class="c" style="left:390.0px;top:138.3px;width:31.75px;font-size:8.6px;font-weight:bold;line-height:11px;color:#e8202c;">0<span style="font-weight:normal;margin:0 1.5px;opacity:.75">/</span>1</div>
<div class="abs" style="left:421.75px;top:134.10000000000002px;width:31.75px;height:19px;"></div>
<div class="abs" style="left:421.75px;top:134.10000000000002px;width:1px;height:19px;background:#e3e3e3"></div>
<div class="abs" style="left:422.75px;top:150.3px;width:30.75px;height:2.8px;background:#f39221;"></div>
<div class="c" style="left:421.75px;top:138.3px;width:31.75px;font-size:8.6px;font-weight:bold;line-height:11px;color:#e8202c;">0<span style="font-weight:normal;margin:0 1.5px;opacity:.75">/</span>1</div>
<div class="abs" style="left:453.5px;top:134.10000000000002px;width:31.75px;height:19px;"></div>
<div class="abs" style="left:453.5px;top:134.10000000000002px;width:1px;height:19px;background:#e3e3e3"></div>
<div class="abs" style="left:454.5px;top:150.3px;width:30.75px;height:2.8px;background:#f39221;"></div>
<div class="c" style="left:453.5px;top:138.3px;width:31.75px;font-size:8.6px;font-weight:bold;line-height:11px;color:#e8202c;">0<span style="font-weight:normal;margin:0 1.5px;opacity:.75">/</span>1</div>
<div class="abs" style="left:485.25px;top:134.10000000000002px;width:31.75px;height:19px;"></div>
<div class="abs" style="left:485.25px;top:134.10000000000002px;width:1px;height:19px;background:#e3e3e3"></div>
<div class="abs" style="left:486.25px;top:150.3px;width:30.75px;height:2.8px;background:#f39221;"></div>
<div class="c" style="left:485.25px;top:138.3px;width:31.75px;font-size:8.6px;font-weight:bold;line-height:11px;color:#e8202c;">0<span style="font-weight:normal;margin:0 1.5px;opacity:.75">/</span>1</div>
<div class="abs" style="left:517.0px;top:134.10000000000002px;width:31.75px;height:19px;"></div>
<div class="abs" style="left:517.0px;top:134.10000000000002px;width:1px;height:19px;background:#e3e3e3"></div>
<div class="abs" style="left:518.0px;top:150.3px;width:30.75px;height:2.8px;background:#f39221;"></div>
<div class="c" style="left:517.0px;top:138.3px;width:31.75px;font-size:8.6px;font-weight:bold;line-height:11px;color:#e8202c;">0<span style="font-weight:normal;margin:0 1.5px;opacity:.75">/</span>1</div>
<div class="abs" style="left:548.75px;top:134.10000000000002px;width:31.75px;height:19px;background:#eeeefc;"></div>
<div class="abs" style="left:548.75px;top:134.10000000000002px;width:1px;height:19px;background:rgba(210,210,225,.6)"></div>
<div class="abs" style="left:549.75px;top:150.3px;width:30.75px;height:2.8px;background:#f39221;"></div>
<div class="c" style="left:548.75px;top:138.3px;width:31.75px;font-size:8.6px;font-weight:bold;line-height:11px;color:#e8202c;">0<span style="font-weight:normal;margin:0 1.5px;opacity:.75">/</span>1</div>
<div class="abs" style="left:580.5px;top:134.10000000000002px;width:31.75px;height:19px;background:#eeeefc;"></div>
<div class="abs" style="left:580.5px;top:134.10000000000002px;width:1px;height:19px;background:rgba(210,210,225,.6)"></div>
<div class="abs" style="left:581.5px;top:150.3px;width:30.75px;height:2.8px;background:#f39221;"></div>
<div class="c" style="left:580.5px;top:138.3px;width:31.75px;font-size:8.6px;font-weight:bold;line-height:11px;color:#e8202c;">0<span style="font-weight:normal;margin:0 1.5px;opacity:.75">/</span>1</div>
<div class="abs" style="left:612.25px;top:134.10000000000002px;width:31.75px;height:19px;"></div>
<div class="abs" style="left:612.25px;top:134.10000000000002px;width:1px;height:19px;background:#e3e3e3"></div>
<div class="abs" style="left:613.25px;top:150.3px;width:30.75px;height:2.8px;background:#f39221;"></div>
<div class="c" style="left:612.25px;top:138.3px;width:31.75px;font-size:8.6px;font-weight:bold;line-height:11px;color:#e8202c;">0<span style="font-weight:normal;margin:0 1.5px;opacity:.75">/</span>1</div>
<div class="abs" style="left:644.0px;top:134.10000000000002px;width:31.75px;height:19px;"></div>
<div class="abs" style="left:644.0px;top:134.10000000000002px;width:1px;height:19px;background:#e3e3e3"></div>
<div class="abs" style="left:645.0px;top:150.3px;width:30.75px;height:2.8px;background:#f39221;"></div>
<div class="c" style="left:644.0px;top:138.3px;width:31.75px;font-size:8.6px;font-weight:bold;line-height:11px;color:#e8202c;">0<span style="font-weight:normal;margin:0 1.5px;opacity:.75">/</span>1</div>
<div class="abs" style="left:675.75px;top:134.10000000000002px;width:31.75px;height:19px;"></div>
<div class="abs" style="left:675.75px;top:134.10000000000002px;width:1px;height:19px;background:#e3e3e3"></div>
<div class="abs" style="left:676.75px;top:150.3px;width:30.75px;height:2.8px;background:#f39221;"></div>
<div class="c" style="left:675.75px;top:138.3px;width:31.75px;font-size:8.6px;font-weight:bold;line-height:11px;color:#e8202c;">0<span style="font-weight:normal;margin:0 1.5px;opacity:.75">/</span>1</div>
<div class="abs" style="left:707.5px;top:134.10000000000002px;width:31.75px;height:19px;"></div>
<div class="abs" style="left:707.5px;top:134.10000000000002px;width:1px;height:19px;background:#e3e3e3"></div>
<div class="abs" style="left:708.5px;top:150.3px;width:30.75px;height:2.8px;background:#f39221;"></div>
<div class="c" style="left:707.5px;top:138.3px;width:31.75px;font-size:8.6px;font-weight:bold;line-height:11px;color:#e8202c;">0<span style="font-weight:normal;margin:0 1.5px;opacity:.75">/</span>1</div>
<div class="abs" style="left:739.25px;top:134.10000000000002px;width:31.75px;height:19px;"></div>
<div class="abs" style="left:739.25px;top:134.10000000000002px;width:1px;height:19px;background:#e3e3e3"></div>
<div class="abs" style="left:740.25px;top:150.3px;width:30.75px;height:2.8px;background:#f39221;"></div>
<div class="c" style="left:739.25px;top:138.3px;width:31.75px;font-size:8.6px;font-weight:bold;line-height:11px;color:#e8202c;">0<span style="font-weight:normal;margin:0 1.5px;opacity:.75">/</span>1</div>
<div class="abs" style="left:0;top:171.60000000000002px;width:136px;height:1px;background:#e3e3e3"></div>
<div class="abs" style="left:6.600000000000001px;top:157.70000000000005px;width:3.4px;height:5.4px;border-left:1px solid #666;border-bottom:1px solid #666"></div>
<div class="t" style="left:12.200000000000003px;top:157.40000000000003px;font-size:8.2px;line-height:11px;color:#5e5e5e">[OTA] Doppia</div>
<div class="abs hatch" style="left:136.0px;top:153.10000000000002px;width:31.75px;height:19px;"></div>
<div class="abs" style="left:136.0px;top:153.10000000000002px;width:1px;height:19px;background:#e3e3e3"></div>
<div class="abs" style="left:136.0px;top:169.3px;width:31.75px;height:2.8px;background:#1fa64a;opacity:.6;"></div>
<div class="c" style="left:136.0px;top:157.3px;width:31.75px;font-size:8.6px;font-weight:bold;line-height:11px;color:#3b9a3f;opacity:.5;">0<span style="font-weight:normal;margin:0 1.5px;opacity:.75">/</span><span style="font-size:7.6px;position:relative;top:-0.6px">&#8734;</span></div>
<div class="abs hatch" style="left:167.75px;top:153.10000000000002px;width:31.75px;height:19px;"></div>
<div class="abs" style="left:167.75px;top:153.10000000000002px;width:0;height:19px;border-left:1px dotted rgba(150,150,150,.45)"></div>
<div class="abs" style="left:167.75px;top:169.3px;width:31.75px;height:2.8px;background:#1fa64a;opacity:.6;"></div>
<div class="c" style="left:167.75px;top:157.3px;width:31.75px;font-size:8.6px;font-weight:bold;line-height:11px;color:#3b9a3f;opacity:.5;">0<span style="font-weight:normal;margin:0 1.5px;opacity:.75">/</span><span style="font-size:7.6px;position:relative;top:-0.6px">&#8734;</span></div>
<div class="abs hatch" style="left:199.5px;top:153.10000000000002px;width:31.75px;height:19px;"></div>
<div class="abs" style="left:199.5px;top:153.10000000000002px;width:0;height:19px;border-left:1px dotted rgba(150,150,150,.45)"></div>
<div class="abs" style="left:199.5px;top:169.3px;width:31.75px;height:2.8px;background:#1fa64a;opacity:.6;"></div>
<div class="c" style="left:199.5px;top:157.3px;width:31.75px;font-size:8.6px;font-weight:bold;line-height:11px;color:#3b9a3f;opacity:.5;">0<span style="font-weight:normal;margin:0 1.5px;opacity:.75">/</span><span style="font-size:7.6px;position:relative;top:-0.6px">&#8734;</span></div>
<div class="abs" style="left:231.25px;top:153.10000000000002px;width:31.75px;height:19px;"></div>
<div class="abs" style="left:231.25px;top:153.10000000000002px;width:1px;height:19px;background:#e3e3e3"></div>
<div class="abs" style="left:232.25px;top:169.3px;width:30.75px;height:2.8px;background:#1fa64a;"></div>
<div class="c" style="left:231.25px;top:157.3px;width:31.75px;font-size:8.6px;font-weight:bold;line-height:11px;color:#3b9a3f;">0<span style="font-weight:normal;margin:0 1.5px;opacity:.75">/</span><span style="font-size:7.6px;position:relative;top:-0.6px">&#8734;</span></div>
<div class="abs" style="left:263.0px;top:153.10000000000002px;width:31.75px;height:19px;"></div>
<div class="abs" style="left:263.0px;top:153.10000000000002px;width:1px;height:19px;background:#e3e3e3"></div>
<div class="abs" style="left:264.0px;top:169.3px;width:30.75px;height:2.8px;background:#1fa64a;"></div>
<div class="c" style="left:263.0px;top:157.3px;width:31.75px;font-size:8.6px;font-weight:bold;line-height:11px;color:#3b9a3f;">0<span style="font-weight:normal;margin:0 1.5px;opacity:.75">/</span><span style="font-size:7.6px;position:relative;top:-0.6px">&#8734;</span></div>
<div class="abs" style="left:294.75px;top:153.10000000000002px;width:31.75px;height:19px;"></div>
<div class="abs" style="left:294.75px;top:153.10000000000002px;width:1px;height:19px;background:#e3e3e3"></div>
<div class="abs" style="left:295.75px;top:169.3px;width:30.75px;height:2.8px;background:#1fa64a;"></div>
<div class="c" style="left:294.75px;top:157.3px;width:31.75px;font-size:8.6px;font-weight:bold;line-height:11px;color:#3b9a3f;">0<span style="font-weight:normal;margin:0 1.5px;opacity:.75">/</span><span style="font-size:7.6px;position:relative;top:-0.6px">&#8734;</span></div>
<div class="abs" style="left:326.5px;top:153.10000000000002px;width:31.75px;height:19px;background:#eeeefc;"></div>
<div class="abs" style="left:326.5px;top:153.10000000000002px;width:1px;height:19px;background:rgba(210,210,225,.6)"></div>
<div class="abs" style="left:327.5px;top:169.3px;width:30.75px;height:2.8px;background:#1fa64a;"></div>
<div class="c" style="left:326.5px;top:157.3px;width:31.75px;font-size:8.6px;font-weight:bold;line-height:11px;color:#3b9a3f;">0<span style="font-weight:normal;margin:0 1.5px;opacity:.75">/</span><span style="font-size:7.6px;position:relative;top:-0.6px">&#8734;</span></div>
<div class="abs" style="left:358.25px;top:153.10000000000002px;width:31.75px;height:19px;background:#eeeefc;"></div>
<div class="abs" style="left:358.25px;top:153.10000000000002px;width:1px;height:19px;background:rgba(210,210,225,.6)"></div>
<div class="abs" style="left:359.25px;top:169.3px;width:30.75px;height:2.8px;background:#1fa64a;"></div>
<div class="c" style="left:358.25px;top:157.3px;width:31.75px;font-size:8.6px;font-weight:bold;line-height:11px;color:#3b9a3f;">0<span style="font-weight:normal;margin:0 1.5px;opacity:.75">/</span><span style="font-size:7.6px;position:relative;top:-0.6px">&#8734;</span></div>
<div class="abs" style="left:390.0px;top:153.10000000000002px;width:31.75px;height:19px;"></div>
<div class="abs" style="left:390.0px;top:153.10000000000002px;width:1px;height:19px;background:#e3e3e3"></div>
<div class="abs" style="left:391.0px;top:169.3px;width:30.75px;height:2.8px;background:#1fa64a;"></div>
<div class="c" style="left:390.0px;top:157.3px;width:31.75px;font-size:8.6px;font-weight:bold;line-height:11px;color:#3b9a3f;">0<span style="font-weight:normal;margin:0 1.5px;opacity:.75">/</span><span style="font-size:7.6px;position:relative;top:-0.6px">&#8734;</span></div>
<div class="abs" style="left:421.75px;top:153.10000000000002px;width:31.75px;height:19px;"></div>
<div class="abs" style="left:421.75px;top:153.10000000000002px;width:1px;height:19px;background:#e3e3e3"></div>
<div class="abs" style="left:422.75px;top:169.3px;width:30.75px;height:2.8px;background:#1fa64a;"></div>
<div class="c" style="left:421.75px;top:157.3px;width:31.75px;font-size:8.6px;font-weight:bold;line-height:11px;color:#3b9a3f;">0<span style="font-weight:normal;margin:0 1.5px;opacity:.75">/</span><span style="font-size:7.6px;position:relative;top:-0.6px">&#8734;</span></div>
<div class="abs" style="left:453.5px;top:153.10000000000002px;width:31.75px;height:19px;"></div>
<div class="abs" style="left:453.5px;top:153.10000000000002px;width:1px;height:19px;background:#e3e3e3"></div>
<div class="abs" style="left:454.5px;top:169.3px;width:30.75px;height:2.8px;background:#1fa64a;"></div>
<div class="c" style="left:453.5px;top:157.3px;width:31.75px;font-size:8.6px;font-weight:bold;line-height:11px;color:#3b9a3f;">0<span style="font-weight:normal;margin:0 1.5px;opacity:.75">/</span><span style="font-size:7.6px;position:relative;top:-0.6px">&#8734;</span></div>
<div class="abs" style="left:485.25px;top:153.10000000000002px;width:31.75px;height:19px;"></div>
<div class="abs" style="left:485.25px;top:153.10000000000002px;width:1px;height:19px;background:#e3e3e3"></div>
<div class="abs" style="left:486.25px;top:169.3px;width:30.75px;height:2.8px;background:#1fa64a;"></div>
<div class="c" style="left:485.25px;top:157.3px;width:31.75px;font-size:8.6px;font-weight:bold;line-height:11px;color:#3b9a3f;">0<span style="font-weight:normal;margin:0 1.5px;opacity:.75">/</span><span style="font-size:7.6px;position:relative;top:-0.6px">&#8734;</span></div>
<div class="abs" style="left:517.0px;top:153.10000000000002px;width:31.75px;height:19px;"></div>
<div class="abs" style="left:517.0px;top:153.10000000000002px;width:1px;height:19px;background:#e3e3e3"></div>
<div class="abs" style="left:518.0px;top:169.3px;width:30.75px;height:2.8px;background:#1fa64a;"></div>
<div class="c" style="left:517.0px;top:157.3px;width:31.75px;font-size:8.6px;font-weight:bold;line-height:11px;color:#3b9a3f;">0<span style="font-weight:normal;margin:0 1.5px;opacity:.75">/</span><span style="font-size:7.6px;position:relative;top:-0.6px">&#8734;</span></div>
<div class="abs" style="left:548.75px;top:153.10000000000002px;width:31.75px;height:19px;background:#eeeefc;"></div>
<div class="abs" style="left:548.75px;top:153.10000000000002px;width:1px;height:19px;background:rgba(210,210,225,.6)"></div>
<div class="abs" style="left:549.75px;top:169.3px;width:30.75px;height:2.8px;background:#1fa64a;"></div>
<div class="c" style="left:548.75px;top:157.3px;width:31.75px;font-size:8.6px;font-weight:bold;line-height:11px;color:#3b9a3f;">0<span style="font-weight:normal;margin:0 1.5px;opacity:.75">/</span><span style="font-size:7.6px;position:relative;top:-0.6px">&#8734;</span></div>
<div class="abs" style="left:580.5px;top:153.10000000000002px;width:31.75px;height:19px;background:#eeeefc;"></div>
<div class="abs" style="left:580.5px;top:153.10000000000002px;width:1px;height:19px;background:rgba(210,210,225,.6)"></div>
<div class="abs" style="left:581.5px;top:169.3px;width:30.75px;height:2.8px;background:#1fa64a;"></div>
<div class="c" style="left:580.5px;top:157.3px;width:31.75px;font-size:8.6px;font-weight:bold;line-height:11px;color:#3b9a3f;">0<span style="font-weight:normal;margin:0 1.5px;opacity:.75">/</span><span style="font-size:7.6px;position:relative;top:-0.6px">&#8734;</span></div>
<div class="abs" style="left:612.25px;top:153.10000000000002px;width:31.75px;height:19px;"></div>
<div class="abs" style="left:612.25px;top:153.10000000000002px;width:1px;height:19px;background:#e3e3e3"></div>
<div class="abs" style="left:613.25px;top:169.3px;width:30.75px;height:2.8px;background:#1fa64a;"></div>
<div class="c" style="left:612.25px;top:157.3px;width:31.75px;font-size:8.6px;font-weight:bold;line-height:11px;color:#3b9a3f;">0<span style="font-weight:normal;margin:0 1.5px;opacity:.75">/</span><span style="font-size:7.6px;position:relative;top:-0.6px">&#8734;</span></div>
<div class="abs" style="left:644.0px;top:153.10000000000002px;width:31.75px;height:19px;"></div>
<div class="abs" style="left:644.0px;top:153.10000000000002px;width:1px;height:19px;background:#e3e3e3"></div>
<div class="abs" style="left:645.0px;top:169.3px;width:30.75px;height:2.8px;background:#1fa64a;"></div>
<div class="c" style="left:644.0px;top:157.3px;width:31.75px;font-size:8.6px;font-weight:bold;line-height:11px;color:#3b9a3f;">0<span style="font-weight:normal;margin:0 1.5px;opacity:.75">/</span><span style="font-size:7.6px;position:relative;top:-0.6px">&#8734;</span></div>
<div class="abs" style="left:675.75px;top:153.10000000000002px;width:31.75px;height:19px;"></div>
<div class="abs" style="left:675.75px;top:153.10000000000002px;width:1px;height:19px;background:#e3e3e3"></div>
<div class="abs" style="left:676.75px;top:169.3px;width:30.75px;height:2.8px;background:#1fa64a;"></div>
<div class="c" style="left:675.75px;top:157.3px;width:31.75px;font-size:8.6px;font-weight:bold;line-height:11px;color:#3b9a3f;">0<span style="font-weight:normal;margin:0 1.5px;opacity:.75">/</span><span style="font-size:7.6px;position:relative;top:-0.6px">&#8734;</span></div>
<div class="abs" style="left:707.5px;top:153.10000000000002px;width:31.75px;height:19px;"></div>
<div class="abs" style="left:707.5px;top:153.10000000000002px;width:1px;height:19px;background:#e3e3e3"></div>
<div class="abs" style="left:708.5px;top:169.3px;width:30.75px;height:2.8px;background:#1fa64a;"></div>
<div class="c" style="left:707.5px;top:157.3px;width:31.75px;font-size:8.6px;font-weight:bold;line-height:11px;color:#3b9a3f;">0<span style="font-weight:normal;margin:0 1.5px;opacity:.75">/</span><span style="font-size:7.6px;position:relative;top:-0.6px">&#8734;</span></div>
<div class="abs" style="left:739.25px;top:153.10000000000002px;width:31.75px;height:19px;"></div>
<div class="abs" style="left:739.25px;top:153.10000000000002px;width:1px;height:19px;background:#e3e3e3"></div>
<div class="abs" style="left:740.25px;top:169.3px;width:30.75px;height:2.8px;background:#1fa64a;"></div>
<div class="c" style="left:739.25px;top:157.3px;width:31.75px;font-size:8.6px;font-weight:bold;line-height:11px;color:#3b9a3f;">0<span style="font-weight:normal;margin:0 1.5px;opacity:.75">/</span><span style="font-size:7.6px;position:relative;top:-0.6px">&#8734;</span></div>
<div class="abs" style="left:0;top:172.10000000000002px;width:758px;height:37.5px;background:#5b626d"></div>
<div class="abs" style="left:135.5px;top:172.10000000000002px;width:1.3px;height:37.5px;background:#c9cbce"></div>
<div class="t" style="left:7px;top:185.10000000000002px;font-size:8.2px;line-height:11px;color:#fff">Expedia</div>
<svg class="abs" style="left:121.5px;top:187.60000000000002px" width="9" height="6" viewBox="0 0 9 6"><path d="M0.8 0.8 L4.5 4.6 L8.2 0.8" fill="none" stroke="#fff" stroke-width="1.5"/></svg>
<div class="abs" style="left:0;top:247.70000000000005px;width:136px;height:1px;background:#e3e3e3"></div>
<div class="t" style="left:4px;top:223.5px;font-size:8.2px;line-height:11px;color:#5e5e5e">Singola</div>
<div class="abs hatch" style="left:136.0px;top:209.60000000000002px;width:31.75px;height:38.6px;"></div>
<div class="abs" style="left:136.0px;top:209.60000000000002px;width:1px;height:38.6px;background:#e3e3e3"></div>
<div class="abs" style="left:136.0px;top:245.40000000000003px;width:31.75px;height:2.8px;background:#f39221;opacity:.6;"></div>
<div class="c" style="left:136.0px;top:217.90000000000003px;width:31.75px;font-size:8.4px;font-weight:bold;line-height:11px;color:#333;opacity:.5;">7</div>
<div class="c" style="left:136.0px;top:230.10000000000002px;width:31.75px;font-size:8.6px;font-weight:bold;line-height:11px;color:#e8202c;opacity:.5;">0<span style="font-weight:normal;margin:0 1.5px;opacity:.75">/</span>2</div>
<div class="abs hatch" style="left:167.75px;top:209.60000000000002px;width:31.75px;height:38.6px;"></div>
<div class="abs" style="left:167.75px;top:209.60000000000002px;width:0;height:38.6px;border-left:1px dotted rgba(150,150,150,.45)"></div>
<div class="abs" style="left:167.75px;top:245.40000000000003px;width:31.75px;height:2.8px;background:#f39221;opacity:.6;"></div>
<div class="c" style="left:167.75px;top:217.90000000000003px;width:31.75px;font-size:8.4px;font-weight:bold;line-height:11px;color:#333;opacity:.5;">7</div>
<div class="c" style="left:167.75px;top:230.10000000000002px;width:31.75px;font-size:8.6px;font-weight:bold;line-height:11px;color:#e8202c;opacity:.5;">0<span style="font-weight:normal;margin:0 1.5px;opacity:.75">/</span>2</div>
<div class="abs hatch" style="left:199.5px;top:209.60000000000002px;width:31.75px;height:38.6px;"></div>
<div class="abs" style="left:199.5px;top:209.60000000000002px;width:0;height:38.6px;border-left:1px dotted rgba(150,150,150,.45)"></div>
<div class="abs" style="left:199.5px;top:245.40000000000003px;width:31.75px;height:2.8px;background:#f39221;opacity:.6;"></div>
<div class="c" style="left:199.5px;top:217.90000000000003px;width:31.75px;font-size:8.4px;font-weight:bold;line-height:11px;color:#333;opacity:.5;">7</div>
<div class="c" style="left:199.5px;top:230.10000000000002px;width:31.75px;font-size:8.6px;font-weight:bold;line-height:11px;color:#e8202c;opacity:.5;">0<span style="font-weight:normal;margin:0 1.5px;opacity:.75">/</span>2</div>
<div class="abs" style="left:231.25px;top:209.60000000000002px;width:31.75px;height:38.6px;"></div>
<div class="abs" style="left:231.25px;top:209.60000000000002px;width:1px;height:38.6px;background:#e3e3e3"></div>
<div class="abs" style="left:232.25px;top:245.40000000000003px;width:30.75px;height:2.8px;background:#f39221;"></div>
<div class="c" style="left:231.25px;top:217.90000000000003px;width:31.75px;font-size:8.4px;font-weight:bold;line-height:11px;color:#333;">7</div>
<div class="c" style="left:231.25px;top:230.10000000000002px;width:31.75px;font-size:8.6px;font-weight:bold;line-height:11px;color:#e8202c;">0<span style="font-weight:normal;margin:0 1.5px;opacity:.75">/</span>2</div>
<div class="abs" style="left:263.0px;top:209.60000000000002px;width:31.75px;height:38.6px;"></div>
<div class="abs" style="left:263.0px;top:209.60000000000002px;width:1px;height:38.6px;background:#e3e3e3"></div>
<div class="abs" style="left:264.0px;top:245.40000000000003px;width:30.75px;height:2.8px;background:#f39221;"></div>
<div class="c" style="left:263.0px;top:217.90000000000003px;width:31.75px;font-size:8.4px;font-weight:bold;line-height:11px;color:#333;">7</div>
<div class="c" style="left:263.0px;top:230.10000000000002px;width:31.75px;font-size:8.6px;font-weight:bold;line-height:11px;color:#e8202c;">0<span style="font-weight:normal;margin:0 1.5px;opacity:.75">/</span>2</div>
<div class="abs" style="left:294.75px;top:209.60000000000002px;width:31.75px;height:38.6px;"></div>
<div class="abs" style="left:294.75px;top:209.60000000000002px;width:1px;height:38.6px;background:#e3e3e3"></div>
<div class="abs" style="left:295.75px;top:245.40000000000003px;width:30.75px;height:2.8px;background:#f39221;"></div>
<div class="c" style="left:294.75px;top:217.90000000000003px;width:31.75px;font-size:8.4px;font-weight:bold;line-height:11px;color:#333;">7</div>
<div class="c" style="left:294.75px;top:230.10000000000002px;width:31.75px;font-size:8.6px;font-weight:bold;line-height:11px;color:#e8202c;">0<span style="font-weight:normal;margin:0 1.5px;opacity:.75">/</span>2</div>
<div class="abs" style="left:326.5px;top:209.60000000000002px;width:31.75px;height:38.6px;background:#eeeefc;"></div>
<div class="abs" style="left:326.5px;top:209.60000000000002px;width:1px;height:38.6px;background:rgba(210,210,225,.6)"></div>
<div class="abs" style="left:327.5px;top:245.40000000000003px;width:30.75px;height:2.8px;background:#f39221;"></div>
<div class="c" style="left:326.5px;top:217.90000000000003px;width:31.75px;font-size:8.4px;font-weight:bold;line-height:11px;color:#333;">7</div>
<div class="c" style="left:326.5px;top:230.10000000000002px;width:31.75px;font-size:8.6px;font-weight:bold;line-height:11px;color:#e8202c;">0<span style="font-weight:normal;margin:0 1.5px;opacity:.75">/</span>2</div>
<div class="abs" style="left:358.25px;top:209.60000000000002px;width:31.75px;height:38.6px;background:#eeeefc;"></div>
<div class="abs" style="left:358.25px;top:209.60000000000002px;width:1px;height:38.6px;background:rgba(210,210,225,.6)"></div>
<div class="abs" style="left:359.25px;top:245.40000000000003px;width:30.75px;height:2.8px;background:#f39221;"></div>
<div class="c" style="left:358.25px;top:217.90000000000003px;width:31.75px;font-size:8.4px;font-weight:bold;line-height:11px;color:#333;">7</div>
<div class="c" style="left:358.25px;top:230.10000000000002px;width:31.75px;font-size:8.6px;font-weight:bold;line-height:11px;color:#e8202c;">0<span style="font-weight:normal;margin:0 1.5px;opacity:.75">/</span>2</div>
<div class="abs" style="left:390.0px;top:209.60000000000002px;width:31.75px;height:38.6px;"></div>
<div class="abs" style="left:390.0px;top:209.60000000000002px;width:1px;height:38.6px;background:#e3e3e3"></div>
<div class="abs" style="left:391.0px;top:245.40000000000003px;width:30.75px;height:2.8px;background:#f39221;"></div>
<div class="abs" style="left:399.9px;top:218.40000000000003px;width:11.8px;height:10.3px;background:#e07b0c;color:#fff;font-weight:bold;font-size:8px;line-height:10.3px;text-align:center">16</div>
<div class="c" style="left:390.0px;top:230.10000000000002px;width:31.75px;font-size:8.6px;font-weight:bold;line-height:11px;color:#e8202c;">0<span style="font-weight:normal;margin:0 1.5px;opacity:.75">/</span>2</div>
<div class="abs" style="left:421.75px;top:209.60000000000002px;width:31.75px;height:38.6px;"></div>
<div class="abs" style="left:421.75px;top:209.60000000000002px;width:1px;height:38.6px;background:#e3e3e3"></div>
<div class="abs" style="left:422.75px;top:245.40000000000003px;width:30.75px;height:2.8px;background:#f39221;"></div>
<div class="c" style="left:421.75px;top:217.90000000000003px;width:31.75px;font-size:8.4px;font-weight:bold;line-height:11px;color:#333;">7</div>
<div class="c" style="left:421.75px;top:230.10000000000002px;width:31.75px;font-size:8.6px;font-weight:bold;line-height:11px;color:#e8202c;">0<span style="font-weight:normal;margin:0 1.5px;opacity:.75">/</span>2</div>
<div class="abs" style="left:453.5px;top:209.60000000000002px;width:31.75px;height:38.6px;"></div>
<div class="abs" style="left:453.5px;top:209.60000000000002px;width:1px;height:38.6px;background:#e3e3e3"></div>
<div class="abs" style="left:454.5px;top:245.40000000000003px;width:30.75px;height:2.8px;background:#f39221;"></div>
<div class="c" style="left:453.5px;top:217.90000000000003px;width:31.75px;font-size:8.4px;font-weight:bold;line-height:11px;color:#333;">7</div>
<div class="c" style="left:453.5px;top:230.10000000000002px;width:31.75px;font-size:8.6px;font-weight:bold;line-height:11px;color:#e8202c;">0<span style="font-weight:normal;margin:0 1.5px;opacity:.75">/</span>2</div>
<div class="abs" style="left:485.25px;top:209.60000000000002px;width:31.75px;height:38.6px;"></div>
<div class="abs" style="left:485.25px;top:209.60000000000002px;width:1px;height:38.6px;background:#e3e3e3"></div>
<div class="abs" style="left:486.25px;top:245.40000000000003px;width:30.75px;height:2.8px;background:#f39221;"></div>
<div class="c" style="left:485.25px;top:217.90000000000003px;width:31.75px;font-size:8.4px;font-weight:bold;line-height:11px;color:#333;">7</div>
<div class="c" style="left:485.25px;top:230.10000000000002px;width:31.75px;font-size:8.6px;font-weight:bold;line-height:11px;color:#e8202c;">0<span style="font-weight:normal;margin:0 1.5px;opacity:.75">/</span>2</div>
<div class="abs" style="left:517.0px;top:209.60000000000002px;width:31.75px;height:38.6px;"></div>
<div class="abs" style="left:517.0px;top:209.60000000000002px;width:1px;height:38.6px;background:#e3e3e3"></div>
<div class="abs" style="left:518.0px;top:245.40000000000003px;width:30.75px;height:2.8px;background:#f39221;"></div>
<div class="c" style="left:517.0px;top:217.90000000000003px;width:31.75px;font-size:8.4px;font-weight:bold;line-height:11px;color:#333;">7</div>
<div class="c" style="left:517.0px;top:230.10000000000002px;width:31.75px;font-size:8.6px;font-weight:bold;line-height:11px;color:#e8202c;">0<span style="font-weight:normal;margin:0 1.5px;opacity:.75">/</span>2</div>
<div class="abs" style="left:548.75px;top:209.60000000000002px;width:31.75px;height:38.6px;background:#eeeefc;"></div>
<div class="abs" style="left:548.75px;top:209.60000000000002px;width:1px;height:38.6px;background:rgba(210,210,225,.6)"></div>
<div class="abs" style="left:549.75px;top:245.40000000000003px;width:30.75px;height:2.8px;background:#f39221;"></div>
<div class="c" style="left:548.75px;top:217.90000000000003px;width:31.75px;font-size:8.4px;font-weight:bold;line-height:11px;color:#333;">7</div>
<div class="c" style="left:548.75px;top:230.10000000000002px;width:31.75px;font-size:8.6px;font-weight:bold;line-height:11px;color:#e8202c;">0<span style="font-weight:normal;margin:0 1.5px;opacity:.75">/</span>2</div>
<div class="abs" style="left:580.5px;top:209.60000000000002px;width:31.75px;height:38.6px;background:#eeeefc;"></div>
<div class="abs" style="left:580.5px;top:209.60000000000002px;width:1px;height:38.6px;background:rgba(210,210,225,.6)"></div>
<div class="abs" style="left:581.5px;top:245.40000000000003px;width:30.75px;height:2.8px;background:#f39221;"></div>
<div class="c" style="left:580.5px;top:217.90000000000003px;width:31.75px;font-size:8.4px;font-weight:bold;line-height:11px;color:#333;">7</div>
<div class="c" style="left:580.5px;top:230.10000000000002px;width:31.75px;font-size:8.6px;font-weight:bold;line-height:11px;color:#e8202c;">0<span style="font-weight:normal;margin:0 1.5px;opacity:.75">/</span>2</div>
<div class="abs" style="left:612.25px;top:209.60000000000002px;width:31.75px;height:38.6px;"></div>
<div class="abs" style="left:612.25px;top:209.60000000000002px;width:1px;height:38.6px;background:#e3e3e3"></div>
<div class="abs" style="left:613.25px;top:245.40000000000003px;width:30.75px;height:2.8px;background:#f39221;"></div>
<div class="c" style="left:612.25px;top:217.90000000000003px;width:31.75px;font-size:8.4px;font-weight:bold;line-height:11px;color:#333;">7</div>
<div class="c" style="left:612.25px;top:230.10000000000002px;width:31.75px;font-size:8.6px;font-weight:bold;line-height:11px;color:#e8202c;">0<span style="font-weight:normal;margin:0 1.5px;opacity:.75">/</span>2</div>
<div class="abs" style="left:644.0px;top:209.60000000000002px;width:31.75px;height:38.6px;"></div>
<div class="abs" style="left:644.0px;top:209.60000000000002px;width:1px;height:38.6px;background:#e3e3e3"></div>
<div class="abs" style="left:645.0px;top:245.40000000000003px;width:30.75px;height:2.8px;background:#f39221;"></div>
<div class="c" style="left:644.0px;top:217.90000000000003px;width:31.75px;font-size:8.4px;font-weight:bold;line-height:11px;color:#333;">7</div>
<div class="c" style="left:644.0px;top:230.10000000000002px;width:31.75px;font-size:8.6px;font-weight:bold;line-height:11px;color:#e8202c;">0<span style="font-weight:normal;margin:0 1.5px;opacity:.75">/</span>2</div>
<div class="abs" style="left:675.75px;top:209.60000000000002px;width:31.75px;height:38.6px;"></div>
<div class="abs" style="left:675.75px;top:209.60000000000002px;width:1px;height:38.6px;background:#e3e3e3"></div>
<div class="abs" style="left:676.75px;top:245.40000000000003px;width:30.75px;height:2.8px;background:#f39221;"></div>
<div class="c" style="left:675.75px;top:217.90000000000003px;width:31.75px;font-size:8.4px;font-weight:bold;line-height:11px;color:#333;">7</div>
<div class="c" style="left:675.75px;top:230.10000000000002px;width:31.75px;font-size:8.6px;font-weight:bold;line-height:11px;color:#e8202c;">0<span style="font-weight:normal;margin:0 1.5px;opacity:.75">/</span>2</div>
<div class="abs" style="left:707.5px;top:209.60000000000002px;width:31.75px;height:38.6px;"></div>
<div class="abs" style="left:707.5px;top:209.60000000000002px;width:1px;height:38.6px;background:#e3e3e3"></div>
<div class="abs" style="left:708.5px;top:245.40000000000003px;width:30.75px;height:2.8px;background:#f39221;"></div>
<div class="c" style="left:707.5px;top:217.90000000000003px;width:31.75px;font-size:8.4px;font-weight:bold;line-height:11px;color:#333;">7</div>
<div class="c" style="left:707.5px;top:230.10000000000002px;width:31.75px;font-size:8.6px;font-weight:bold;line-height:11px;color:#e8202c;">0<span style="font-weight:normal;margin:0 1.5px;opacity:.75">/</span>2</div>
<div class="abs" style="left:739.25px;top:209.60000000000002px;width:31.75px;height:38.6px;"></div>
<div class="abs" style="left:739.25px;top:209.60000000000002px;width:1px;height:38.6px;background:#e3e3e3"></div>
<div class="abs" style="left:740.25px;top:245.40000000000003px;width:30.75px;height:2.8px;background:#f39221;"></div>
<div class="c" style="left:739.25px;top:217.90000000000003px;width:31.75px;font-size:8.4px;font-weight:bold;line-height:11px;color:#333;">6</div>
<div class="c" style="left:739.25px;top:230.10000000000002px;width:31.75px;font-size:8.6px;font-weight:bold;line-height:11px;color:#e8202c;">0<span style="font-weight:normal;margin:0 1.5px;opacity:.75">/</span>2</div>
<div class="abs" style="left:0;top:266.70000000000005px;width:136px;height:1px;background:#e3e3e3"></div>
<div class="abs" style="left:6.600000000000001px;top:252.80000000000007px;width:3.4px;height:5.4px;border-left:1px solid #666;border-bottom:1px solid #666"></div>
<div class="t" style="left:12.200000000000003px;top:252.50000000000006px;font-size:8.2px;line-height:11px;color:#5e5e5e">Spring Suite</div>
<div class="abs hatch" style="left:136.0px;top:248.20000000000005px;width:31.75px;height:19px;"></div>
<div class="abs" style="left:136.0px;top:248.20000000000005px;width:1px;height:19px;background:#e3e3e3"></div>
<div class="abs" style="left:136.0px;top:264.40000000000003px;width:31.75px;height:2.8px;background:#e03a2b;opacity:.6;"></div>
<div class="c" style="left:136.0px;top:252.40000000000003px;width:31.75px;font-size:8.6px;font-weight:bold;line-height:11px;color:#e8202c;opacity:.5;">0<span style="font-weight:normal;margin:0 1.5px;opacity:.75">/</span>3</div>
<div class="abs hatch" style="left:167.75px;top:248.20000000000005px;width:31.75px;height:19px;"></div>
<div class="abs" style="left:167.75px;top:248.20000000000005px;width:0;height:19px;border-left:1px dotted rgba(150,150,150,.45)"></div>
<div class="abs" style="left:167.75px;top:264.40000000000003px;width:31.75px;height:2.8px;background:#e03a2b;opacity:.6;"></div>
<div class="c" style="left:167.75px;top:252.40000000000003px;width:31.75px;font-size:8.6px;font-weight:bold;line-height:11px;color:#e8202c;opacity:.5;">0<span style="font-weight:normal;margin:0 1.5px;opacity:.75">/</span>3</div>
<div class="abs hatch" style="left:199.5px;top:248.20000000000005px;width:31.75px;height:19px;"></div>
<div class="abs" style="left:199.5px;top:248.20000000000005px;width:0;height:19px;border-left:1px dotted rgba(150,150,150,.45)"></div>
<div class="abs" style="left:199.5px;top:264.40000000000003px;width:31.75px;height:2.8px;background:#e03a2b;opacity:.6;"></div>
<div class="c" style="left:199.5px;top:252.40000000000003px;width:31.75px;font-size:8.6px;font-weight:bold;line-height:11px;color:#e8202c;opacity:.5;">0<span style="font-weight:normal;margin:0 1.5px;opacity:.75">/</span>3</div>
<div class="abs" style="left:231.25px;top:248.20000000000005px;width:31.75px;height:19px;"></div>
<div class="abs" style="left:231.25px;top:248.20000000000005px;width:1px;height:19px;background:#e3e3e3"></div>
<div class="abs" style="left:232.25px;top:264.40000000000003px;width:30.75px;height:2.8px;background:#e03a2b;"></div>
<div class="c" style="left:231.25px;top:252.40000000000003px;width:31.75px;font-size:8.6px;font-weight:bold;line-height:11px;color:#e8202c;">0<span style="font-weight:normal;margin:0 1.5px;opacity:.75">/</span>3</div>
<div class="abs" style="left:263.0px;top:248.20000000000005px;width:31.75px;height:19px;"></div>
<div class="abs" style="left:263.0px;top:248.20000000000005px;width:1px;height:19px;background:#e3e3e3"></div>
<div class="abs" style="left:264.0px;top:264.40000000000003px;width:30.75px;height:2.8px;background:#e03a2b;"></div>
<div class="c" style="left:263.0px;top:252.40000000000003px;width:31.75px;font-size:8.6px;font-weight:bold;line-height:11px;color:#e8202c;">0<span style="font-weight:normal;margin:0 1.5px;opacity:.75">/</span>3</div>
<div class="abs" style="left:294.75px;top:248.20000000000005px;width:31.75px;height:19px;"></div>
<div class="abs" style="left:294.75px;top:248.20000000000005px;width:1px;height:19px;background:#e3e3e3"></div>
<div class="abs" style="left:295.75px;top:264.40000000000003px;width:30.75px;height:2.8px;background:#e03a2b;"></div>
<div class="c" style="left:294.75px;top:252.40000000000003px;width:31.75px;font-size:8.6px;font-weight:bold;line-height:11px;color:#e8202c;">0<span style="font-weight:normal;margin:0 1.5px;opacity:.75">/</span>3</div>
<div class="abs" style="left:326.5px;top:248.20000000000005px;width:31.75px;height:19px;background:#eeeefc;"></div>
<div class="abs" style="left:326.5px;top:248.20000000000005px;width:1px;height:19px;background:rgba(210,210,225,.6)"></div>
<div class="abs" style="left:327.5px;top:264.40000000000003px;width:30.75px;height:2.8px;background:#e03a2b;"></div>
<div class="c" style="left:326.5px;top:252.40000000000003px;width:31.75px;font-size:8.6px;font-weight:bold;line-height:11px;color:#e8202c;">0<span style="font-weight:normal;margin:0 1.5px;opacity:.75">/</span>3</div>
<div class="abs" style="left:358.25px;top:248.20000000000005px;width:31.75px;height:19px;background:#eeeefc;"></div>
<div class="abs" style="left:358.25px;top:248.20000000000005px;width:1px;height:19px;background:rgba(210,210,225,.6)"></div>
<div class="abs" style="left:359.25px;top:264.40000000000003px;width:30.75px;height:2.8px;background:#e03a2b;"></div>
<div class="c" style="left:358.25px;top:252.40000000000003px;width:31.75px;font-size:8.6px;font-weight:bold;line-height:11px;color:#e8202c;">0<span style="font-weight:normal;margin:0 1.5px;opacity:.75">/</span>3</div>
<div class="abs" style="left:390.0px;top:248.20000000000005px;width:31.75px;height:19px;"></div>
<div class="abs" style="left:390.0px;top:248.20000000000005px;width:1px;height:19px;background:#e3e3e3"></div>
<div class="abs" style="left:391.0px;top:264.40000000000003px;width:30.75px;height:2.8px;background:#e03a2b;"></div>
<div class="c" style="left:390.0px;top:252.40000000000003px;width:31.75px;font-size:8.6px;font-weight:bold;line-height:11px;color:#e8202c;">0<span style="font-weight:normal;margin:0 1.5px;opacity:.75">/</span>3</div>
<div class="abs" style="left:421.75px;top:248.20000000000005px;width:31.75px;height:19px;"></div>
<div class="abs" style="left:421.75px;top:248.20000000000005px;width:1px;height:19px;background:#e3e3e3"></div>
<div class="abs" style="left:422.75px;top:264.40000000000003px;width:30.75px;height:2.8px;background:#e03a2b;"></div>
<div class="c" style="left:421.75px;top:252.40000000000003px;width:31.75px;font-size:8.6px;font-weight:bold;line-height:11px;color:#e8202c;">0<span style="font-weight:normal;margin:0 1.5px;opacity:.75">/</span>3</div>
<div class="abs" style="left:453.5px;top:248.20000000000005px;width:31.75px;height:19px;"></div>
<div class="abs" style="left:453.5px;top:248.20000000000005px;width:1px;height:19px;background:#e3e3e3"></div>
<div class="abs" style="left:454.5px;top:264.40000000000003px;width:30.75px;height:2.8px;background:#e03a2b;"></div>
<div class="c" style="left:453.5px;top:252.40000000000003px;width:31.75px;font-size:8.6px;font-weight:bold;line-height:11px;color:#e8202c;">0<span style="font-weight:normal;margin:0 1.5px;opacity:.75">/</span>3</div>
<div class="abs" style="left:485.25px;top:248.20000000000005px;width:31.75px;height:19px;"></div>
<div class="abs" style="left:485.25px;top:248.20000000000005px;width:1px;height:19px;background:#e3e3e3"></div>
<div class="abs" style="left:486.25px;top:264.40000000000003px;width:30.75px;height:2.8px;background:#e03a2b;"></div>
<div class="c" style="left:485.25px;top:252.40000000000003px;width:31.75px;font-size:8.6px;font-weight:bold;line-height:11px;color:#e8202c;">0<span style="font-weight:normal;margin:0 1.5px;opacity:.75">/</span>3</div>
<div class="abs" style="left:517.0px;top:248.20000000000005px;width:31.75px;height:19px;"></div>
<div class="abs" style="left:517.0px;top:248.20000000000005px;width:1px;height:19px;background:#e3e3e3"></div>
<div class="abs" style="left:518.0px;top:264.40000000000003px;width:30.75px;height:2.8px;background:#e03a2b;"></div>
<div class="c" style="left:517.0px;top:252.40000000000003px;width:31.75px;font-size:8.6px;font-weight:bold;line-height:11px;color:#e8202c;">0<span style="font-weight:normal;margin:0 1.5px;opacity:.75">/</span>3</div>
<div class="abs" style="left:548.75px;top:248.20000000000005px;width:31.75px;height:19px;background:#eeeefc;"></div>
<div class="abs" style="left:548.75px;top:248.20000000000005px;width:1px;height:19px;background:rgba(210,210,225,.6)"></div>
<div class="abs" style="left:549.75px;top:264.40000000000003px;width:30.75px;height:2.8px;background:#e03a2b;"></div>
<div class="c" style="left:548.75px;top:252.40000000000003px;width:31.75px;font-size:8.6px;font-weight:bold;line-height:11px;color:#e8202c;">0<span style="font-weight:normal;margin:0 1.5px;opacity:.75">/</span>3</div>
<div class="abs" style="left:580.5px;top:248.20000000000005px;width:31.75px;height:19px;background:#eeeefc;"></div>
<div class="abs" style="left:580.5px;top:248.20000000000005px;width:1px;height:19px;background:rgba(210,210,225,.6)"></div>
<div class="abs" style="left:581.5px;top:264.40000000000003px;width:30.75px;height:2.8px;background:#e03a2b;"></div>
<div class="c" style="left:580.5px;top:252.40000000000003px;width:31.75px;font-size:8.6px;font-weight:bold;line-height:11px;color:#e8202c;">0<span style="font-weight:normal;margin:0 1.5px;opacity:.75">/</span>3</div>
<div class="abs" style="left:612.25px;top:248.20000000000005px;width:31.75px;height:19px;"></div>
<div class="abs" style="left:612.25px;top:248.20000000000005px;width:1px;height:19px;background:#e3e3e3"></div>
<div class="abs" style="left:613.25px;top:264.40000000000003px;width:30.75px;height:2.8px;background:#e03a2b;"></div>
<div class="c" style="left:612.25px;top:252.40000000000003px;width:31.75px;font-size:8.6px;font-weight:bold;line-height:11px;color:#e8202c;">0<span style="font-weight:normal;margin:0 1.5px;opacity:.75">/</span>3</div>
<div class="abs" style="left:644.0px;top:248.20000000000005px;width:31.75px;height:19px;"></div>
<div class="abs" style="left:644.0px;top:248.20000000000005px;width:1px;height:19px;background:#e3e3e3"></div>
<div class="abs" style="left:645.0px;top:264.40000000000003px;width:30.75px;height:2.8px;background:#e03a2b;"></div>
<div class="c" style="left:644.0px;top:252.40000000000003px;width:31.75px;font-size:8.6px;font-weight:bold;line-height:11px;color:#e8202c;">0<span style="font-weight:normal;margin:0 1.5px;opacity:.75">/</span>3</div>
<div class="abs" style="left:675.75px;top:248.20000000000005px;width:31.75px;height:19px;"></div>
<div class="abs" style="left:675.75px;top:248.20000000000005px;width:1px;height:19px;background:#e3e3e3"></div>
<div class="abs" style="left:676.75px;top:264.40000000000003px;width:30.75px;height:2.8px;background:#e03a2b;"></div>
<div class="c" style="left:675.75px;top:252.40000000000003px;width:31.75px;font-size:8.6px;font-weight:bold;line-height:11px;color:#e8202c;">0<span style="font-weight:normal;margin:0 1.5px;opacity:.75">/</span>3</div>
<div class="abs" style="left:707.5px;top:248.20000000000005px;width:31.75px;height:19px;"></div>
<div class="abs" style="left:707.5px;top:248.20000000000005px;width:1px;height:19px;background:#e3e3e3"></div>
<div class="abs" style="left:708.5px;top:264.40000000000003px;width:30.75px;height:2.8px;background:#e03a2b;"></div>
<div class="c" style="left:707.5px;top:252.40000000000003px;width:31.75px;font-size:8.6px;font-weight:bold;line-height:11px;color:#e8202c;">0<span style="font-weight:normal;margin:0 1.5px;opacity:.75">/</span>3</div>
<div class="abs" style="left:739.25px;top:248.20000000000005px;width:31.75px;height:19px;"></div>
<div class="abs" style="left:739.25px;top:248.20000000000005px;width:1px;height:19px;background:#e3e3e3"></div>
<div class="abs" style="left:740.25px;top:264.40000000000003px;width:30.75px;height:2.8px;background:#e03a2b;"></div>
<div class="c" style="left:739.25px;top:252.40000000000003px;width:31.75px;font-size:8.6px;font-weight:bold;line-height:11px;color:#e8202c;">0<span style="font-weight:normal;margin:0 1.5px;opacity:.75">/</span>3</div>
<div class="abs" style="left:0;top:285.70000000000005px;width:136px;height:1px;background:#e3e3e3"></div>
<div class="abs" style="left:6.600000000000001px;top:271.80000000000007px;width:3.4px;height:5.4px;border-left:1px solid #666;border-bottom:1px solid #666"></div>
<div class="t" style="left:12.200000000000003px;top:271.50000000000006px;font-size:8.2px;line-height:11px;color:#5e5e5e">[OTA] Doppia</div>
<div class="abs hatch" style="left:136.0px;top:267.20000000000005px;width:31.75px;height:19px;"></div>
<div class="abs" style="left:136.0px;top:267.20000000000005px;width:1px;height:19px;background:#e3e3e3"></div>
<div class="abs" style="left:136.0px;top:283.40000000000003px;width:31.75px;height:2.8px;background:#1fa64a;opacity:.6;"></div>
<div class="c" style="left:136.0px;top:271.40000000000003px;width:31.75px;font-size:8.6px;font-weight:bold;line-height:11px;color:#3b9a3f;opacity:.5;">0<span style="font-weight:normal;margin:0 1.5px;opacity:.75">/</span><span style="font-size:7.6px;position:relative;top:-0.6px">&#8734;</span></div>
<div class="abs hatch" style="left:167.75px;top:267.20000000000005px;width:31.75px;height:19px;"></div>
<div class="abs" style="left:167.75px;top:267.20000000000005px;width:0;height:19px;border-left:1px dotted rgba(150,150,150,.45)"></div>
<div class="abs" style="left:167.75px;top:283.40000000000003px;width:31.75px;height:2.8px;background:#1fa64a;opacity:.6;"></div>
<div class="c" style="left:167.75px;top:271.40000000000003px;width:31.75px;font-size:8.6px;font-weight:bold;line-height:11px;color:#3b9a3f;opacity:.5;">0<span style="font-weight:normal;margin:0 1.5px;opacity:.75">/</span><span style="font-size:7.6px;position:relative;top:-0.6px">&#8734;</span></div>
<div class="abs hatch" style="left:199.5px;top:267.20000000000005px;width:31.75px;height:19px;"></div>
<div class="abs" style="left:199.5px;top:267.20000000000005px;width:0;height:19px;border-left:1px dotted rgba(150,150,150,.45)"></div>
<div class="abs" style="left:199.5px;top:283.40000000000003px;width:31.75px;height:2.8px;background:#1fa64a;opacity:.6;"></div>
<div class="c" style="left:199.5px;top:271.40000000000003px;width:31.75px;font-size:8.6px;font-weight:bold;line-height:11px;color:#3b9a3f;opacity:.5;">0<span style="font-weight:normal;margin:0 1.5px;opacity:.75">/</span><span style="font-size:7.6px;position:relative;top:-0.6px">&#8734;</span></div>
<div class="abs" style="left:231.25px;top:267.20000000000005px;width:31.75px;height:19px;"></div>
<div class="abs" style="left:231.25px;top:267.20000000000005px;width:1px;height:19px;background:#e3e3e3"></div>
<div class="abs" style="left:232.25px;top:283.40000000000003px;width:30.75px;height:2.8px;background:#1fa64a;"></div>
<div class="c" style="left:231.25px;top:271.40000000000003px;width:31.75px;font-size:8.6px;font-weight:bold;line-height:11px;color:#3b9a3f;">0<span style="font-weight:normal;margin:0 1.5px;opacity:.75">/</span><span style="font-size:7.6px;position:relative;top:-0.6px">&#8734;</span></div>
<div class="abs" style="left:263.0px;top:267.20000000000005px;width:31.75px;height:19px;"></div>
<div class="abs" style="left:263.0px;top:267.20000000000005px;width:1px;height:19px;background:#e3e3e3"></div>
<div class="abs" style="left:264.0px;top:283.40000000000003px;width:30.75px;height:2.8px;background:#1fa64a;"></div>
<div class="c" style="left:263.0px;top:271.40000000000003px;width:31.75px;font-size:8.6px;font-weight:bold;line-height:11px;color:#3b9a3f;">0<span style="font-weight:normal;margin:0 1.5px;opacity:.75">/</span><span style="font-size:7.6px;position:relative;top:-0.6px">&#8734;</span></div>
<div class="abs" style="left:294.75px;top:267.20000000000005px;width:31.75px;height:19px;"></div>
<div class="abs" style="left:294.75px;top:267.20000000000005px;width:1px;height:19px;background:#e3e3e3"></div>
<div class="abs" style="left:295.75px;top:283.40000000000003px;width:30.75px;height:2.8px;background:#1fa64a;"></div>
<div class="c" style="left:294.75px;top:271.40000000000003px;width:31.75px;font-size:8.6px;font-weight:bold;line-height:11px;color:#3b9a3f;">0<span style="font-weight:normal;margin:0 1.5px;opacity:.75">/</span><span style="font-size:7.6px;position:relative;top:-0.6px">&#8734;</span></div>
<div class="abs" style="left:326.5px;top:267.20000000000005px;width:31.75px;height:19px;background:#eeeefc;"></div>
<div class="abs" style="left:326.5px;top:267.20000000000005px;width:1px;height:19px;background:rgba(210,210,225,.6)"></div>
<div class="abs" style="left:327.5px;top:283.40000000000003px;width:30.75px;height:2.8px;background:#1fa64a;"></div>
<div class="c" style="left:326.5px;top:271.40000000000003px;width:31.75px;font-size:8.6px;font-weight:bold;line-height:11px;color:#3b9a3f;">0<span style="font-weight:normal;margin:0 1.5px;opacity:.75">/</span><span style="font-size:7.6px;position:relative;top:-0.6px">&#8734;</span></div>
<div class="abs" style="left:358.25px;top:267.20000000000005px;width:31.75px;height:19px;background:#eeeefc;"></div>
<div class="abs" style="left:358.25px;top:267.20000000000005px;width:1px;height:19px;background:rgba(210,210,225,.6)"></div>
<div class="abs" style="left:359.25px;top:283.40000000000003px;width:30.75px;height:2.8px;background:#1fa64a;"></div>
<div class="c" style="left:358.25px;top:271.40000000000003px;width:31.75px;font-size:8.6px;font-weight:bold;line-height:11px;color:#3b9a3f;">0<span style="font-weight:normal;margin:0 1.5px;opacity:.75">/</span><span style="font-size:7.6px;position:relative;top:-0.6px">&#8734;</span></div>
<div class="abs" style="left:390.0px;top:267.20000000000005px;width:31.75px;height:19px;"></div>
<div class="abs" style="left:390.0px;top:267.20000000000005px;width:1px;height:19px;background:#e3e3e3"></div>
<div class="abs" style="left:391.0px;top:283.40000000000003px;width:30.75px;height:2.8px;background:#1fa64a;"></div>
<div class="c" style="left:390.0px;top:271.40000000000003px;width:31.75px;font-size:8.6px;font-weight:bold;line-height:11px;color:#3b9a3f;">0<span style="font-weight:normal;margin:0 1.5px;opacity:.75">/</span><span style="font-size:7.6px;position:relative;top:-0.6px">&#8734;</span></div>
<div class="abs" style="left:421.75px;top:267.20000000000005px;width:31.75px;height:19px;"></div>
<div class="abs" style="left:421.75px;top:267.20000000000005px;width:1px;height:19px;background:#e3e3e3"></div>
<div class="abs" style="left:422.75px;top:283.40000000000003px;width:30.75px;height:2.8px;background:#1fa64a;"></div>
<div class="c" style="left:421.75px;top:271.40000000000003px;width:31.75px;font-size:8.6px;font-weight:bold;line-height:11px;color:#3b9a3f;">0<span style="font-weight:normal;margin:0 1.5px;opacity:.75">/</span><span style="font-size:7.6px;position:relative;top:-0.6px">&#8734;</span></div>
<div class="abs" style="left:453.5px;top:267.20000000000005px;width:31.75px;height:19px;"></div>
<div class="abs" style="left:453.5px;top:267.20000000000005px;width:1px;height:19px;background:#e3e3e3"></div>
<div class="abs" style="left:454.5px;top:283.40000000000003px;width:30.75px;height:2.8px;background:#1fa64a;"></div>
<div class="c" style="left:453.5px;top:271.40000000000003px;width:31.75px;font-size:8.6px;font-weight:bold;line-height:11px;color:#3b9a3f;">0<span style="font-weight:normal;margin:0 1.5px;opacity:.75">/</span><span style="font-size:7.6px;position:relative;top:-0.6px">&#8734;</span></div>
<div class="abs" style="left:485.25px;top:267.20000000000005px;width:31.75px;height:19px;"></div>
<div class="abs" style="left:485.25px;top:267.20000000000005px;width:1px;height:19px;background:#e3e3e3"></div>
<div class="abs" style="left:486.25px;top:283.40000000000003px;width:30.75px;height:2.8px;background:#1fa64a;"></div>
<div class="c" style="left:485.25px;top:271.40000000000003px;width:31.75px;font-size:8.6px;font-weight:bold;line-height:11px;color:#3b9a3f;">0<span style="font-weight:normal;margin:0 1.5px;opacity:.75">/</span><span style="font-size:7.6px;position:relative;top:-0.6px">&#8734;</span></div>
<div class="abs" style="left:517.0px;top:267.20000000000005px;width:31.75px;height:19px;"></div>
<div class="abs" style="left:517.0px;top:267.20000000000005px;width:1px;height:19px;background:#e3e3e3"></div>
<div class="abs" style="left:518.0px;top:283.40000000000003px;width:30.75px;height:2.8px;background:#1fa64a;"></div>
<div class="c" style="left:517.0px;top:271.40000000000003px;width:31.75px;font-size:8.6px;font-weight:bold;line-height:11px;color:#3b9a3f;">0<span style="font-weight:normal;margin:0 1.5px;opacity:.75">/</span><span style="font-size:7.6px;position:relative;top:-0.6px">&#8734;</span></div>
<div class="abs" style="left:548.75px;top:267.20000000000005px;width:31.75px;height:19px;background:#eeeefc;"></div>
<div class="abs" style="left:548.75px;top:267.20000000000005px;width:1px;height:19px;background:rgba(210,210,225,.6)"></div>
<div class="abs" style="left:549.75px;top:283.40000000000003px;width:30.75px;height:2.8px;background:#1fa64a;"></div>
<div class="c" style="left:548.75px;top:271.40000000000003px;width:31.75px;font-size:8.6px;font-weight:bold;line-height:11px;color:#3b9a3f;">0<span style="font-weight:normal;margin:0 1.5px;opacity:.75">/</span><span style="font-size:7.6px;position:relative;top:-0.6px">&#8734;</span></div>
<div class="abs" style="left:580.5px;top:267.20000000000005px;width:31.75px;height:19px;background:#eeeefc;"></div>
<div class="abs" style="left:580.5px;top:267.20000000000005px;width:1px;height:19px;background:rgba(210,210,225,.6)"></div>
<div class="abs" style="left:581.5px;top:283.40000000000003px;width:30.75px;height:2.8px;background:#1fa64a;"></div>
<div class="c" style="left:580.5px;top:271.40000000000003px;width:31.75px;font-size:8.6px;font-weight:bold;line-height:11px;color:#3b9a3f;">0<span style="font-weight:normal;margin:0 1.5px;opacity:.75">/</span><span style="font-size:7.6px;position:relative;top:-0.6px">&#8734;</span></div>
<div class="abs" style="left:612.25px;top:267.20000000000005px;width:31.75px;height:19px;"></div>
<div class="abs" style="left:612.25px;top:267.20000000000005px;width:1px;height:19px;background:#e3e3e3"></div>
<div class="abs" style="left:613.25px;top:283.40000000000003px;width:30.75px;height:2.8px;background:#1fa64a;"></div>
<div class="c" style="left:612.25px;top:271.40000000000003px;width:31.75px;font-size:8.6px;font-weight:bold;line-height:11px;color:#3b9a3f;">0<span style="font-weight:normal;margin:0 1.5px;opacity:.75">/</span><span style="font-size:7.6px;position:relative;top:-0.6px">&#8734;</span></div>
<div class="abs" style="left:644.0px;top:267.20000000000005px;width:31.75px;height:19px;"></div>
<div class="abs" style="left:644.0px;top:267.20000000000005px;width:1px;height:19px;background:#e3e3e3"></div>
<div class="abs" style="left:645.0px;top:283.40000000000003px;width:30.75px;height:2.8px;background:#1fa64a;"></div>
<div class="c" style="left:644.0px;top:271.40000000000003px;width:31.75px;font-size:8.6px;font-weight:bold;line-height:11px;color:#3b9a3f;">0<span style="font-weight:normal;margin:0 1.5px;opacity:.75">/</span><span style="font-size:7.6px;position:relative;top:-0.6px">&#8734;</span></div>
<div class="abs" style="left:675.75px;top:267.20000000000005px;width:31.75px;height:19px;"></div>
<div class="abs" style="left:675.75px;top:267.20000000000005px;width:1px;height:19px;background:#e3e3e3"></div>
<div class="abs" style="left:676.75px;top:283.40000000000003px;width:30.75px;height:2.8px;background:#1fa64a;"></div>
<div class="c" style="left:675.75px;top:271.40000000000003px;width:31.75px;font-size:8.6px;font-weight:bold;line-height:11px;color:#3b9a3f;">0<span style="font-weight:normal;margin:0 1.5px;opacity:.75">/</span><span style="font-size:7.6px;position:relative;top:-0.6px">&#8734;</span></div>
<div class="abs" style="left:707.5px;top:267.20000000000005px;width:31.75px;height:19px;"></div>
<div class="abs" style="left:707.5px;top:267.20000000000005px;width:1px;height:19px;background:#e3e3e3"></div>
<div class="abs" style="left:708.5px;top:283.40000000000003px;width:30.75px;height:2.8px;background:#1fa64a;"></div>
<div class="c" style="left:707.5px;top:271.40000000000003px;width:31.75px;font-size:8.6px;font-weight:bold;line-height:11px;color:#3b9a3f;">0<span style="font-weight:normal;margin:0 1.5px;opacity:.75">/</span><span style="font-size:7.6px;position:relative;top:-0.6px">&#8734;</span></div>
<div class="abs" style="left:739.25px;top:267.20000000000005px;width:31.75px;height:19px;"></div>
<div class="abs" style="left:739.25px;top:267.20000000000005px;width:1px;height:19px;background:#e3e3e3"></div>
<div class="abs" style="left:740.25px;top:283.40000000000003px;width:30.75px;height:2.8px;background:#1fa64a;"></div>
<div class="c" style="left:739.25px;top:271.40000000000003px;width:31.75px;font-size:8.6px;font-weight:bold;line-height:11px;color:#3b9a3f;">0<span style="font-weight:normal;margin:0 1.5px;opacity:.75">/</span><span style="font-size:7.6px;position:relative;top:-0.6px">&#8734;</span></div>
<div class="abs" style="left:0;top:286.4px;width:758px;height:40px;background:#5b626d"></div>
<div class="abs" style="left:135.5px;top:286.4px;width:1.3px;height:40px;background:#c9cbce"></div>
<div class="t" style="left:7.5px;top:299.9px;font-size:8.2px;line-height:11px;color:#fff">Non connesso al Sito</div>
<svg class="abs" style="left:121.5px;top:301.9px" width="9" height="6" viewBox="0 0 9 6"><path d="M0.8 0.8 L4.5 4.6 L8.2 0.8" fill="none" stroke="#fff" stroke-width="1.5"/></svg>
</div>
</body></html>
